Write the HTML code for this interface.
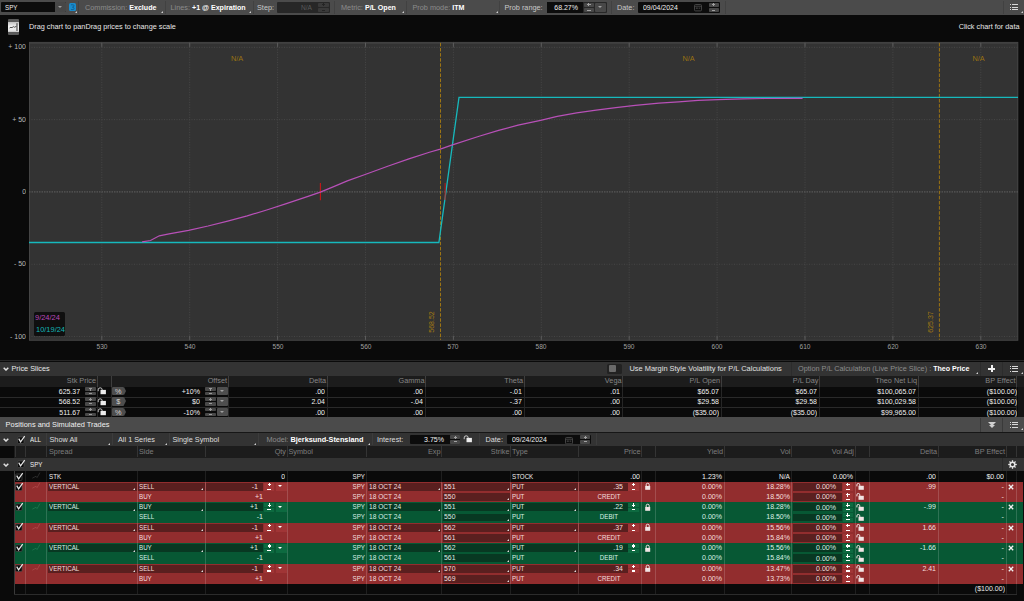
<!DOCTYPE html><html><head><meta charset="utf-8"><title>Analyze</title><style>
*{box-sizing:border-box;margin:0;padding:0}
html,body{width:1024px;height:601px;overflow:hidden;background:#0a0a0a}
body{position:relative;font-family:"Liberation Sans",sans-serif;font-size:7.3px;color:#e6e6e6;line-height:1}
.a{position:absolute;white-space:nowrap}
.t{position:absolute;white-space:nowrap;line-height:10px;height:10px}
.r{text-align:right}
.c{text-align:center}
.b{font-weight:bold;color:#fff;font-size:7.1px}
.g{color:#8c8c8c}
.sep{position:absolute;width:1px;background:#3a3a3a}
.tri{position:absolute;width:0;height:0;border-left:2.6px solid transparent;border-bottom:2.6px solid #cfcfcf}
.spin{position:absolute;width:11px;height:10px}
.spin i{position:absolute;left:0;width:11px;height:4.2px;background:#505050;border-radius:1px}
.spin i:first-child{top:0}
.spin i:last-child{bottom:0}
.spin i:before{content:"";position:absolute;left:4px;top:1.6px;width:3px;height:1px;background:#a8a8a8}
.spin i:first-child:after{content:"";position:absolute;left:5px;top:0.6px;width:1px;height:3px;background:#a8a8a8}
.dd{position:absolute;background:#4e4e4e;border-radius:1px}
.dd:after{content:"";position:absolute;left:50%;top:50%;margin-left:-2.5px;margin-top:-1px;border-left:2.3px solid transparent;border-right:2.3px solid transparent;border-top:2.6px solid #a0a0a0}
</style></head><body>
<div class="a" style="left:0px;top:0px;width:1024px;height:14.5px;background:#4b4b4b;"></div>
<div class="a" style="left:1px;top:2.1px;width:65px;height:10.4px;background:#0c0c0c;border-radius:1px"></div>
<div class="t " style="left:5px;top:2.50px;transform:scaleX(0.85);transform-origin:0 50%;color:#f0f0f0">SPY</div>
<div class="dd" style="left:55px;top:2.2px;width:11px;height:10.2px;background:#474747;border-radius:0 1px 1px 0"></div>
<div class="a" style="left:69.4px;top:2.7px;width:6.6px;height:8.4px;background:#1a8ccc;border-radius:1.5px"></div>
<svg class="a" style="left:69.4px;top:2.7px" width="6.6" height="8.4" viewBox="0 0 6.6 8.4"><path d="M2 1.8 H4.2 Q5 1.8 5 2.8 Q5 4.2 3.4 4.2 Q5 4.2 5 5.6 Q5 6.6 4.2 6.6 H2" fill="none" stroke="#0d5f94" stroke-width="0.9"/></svg>
<div class="tri" style="left:74.8px;top:10.9px;border-bottom-color:#cfcfcf"></div>
<div class="sep" style="left:77.7px;top:1px;height:13px;background:#414141"></div>
<div class="t g" style="left:85px;top:2.50px;">Commission: <span class="b">Exclude</span></div>
<div class="tri" style="left:161px;top:10.5px;border-bottom-color:#cfcfcf"></div>
<div class="sep" style="left:164.5px;top:1px;height:13px;background:#414141"></div>
<div class="t g" style="left:170.5px;top:2.50px;">Lines: <span class="b">+1 @ Expiration</span></div>
<div class="tri" style="left:249px;top:10.5px;border-bottom-color:#cfcfcf"></div>
<div class="sep" style="left:252.5px;top:1px;height:13px;background:#414141"></div>
<div class="t " style="left:257px;top:2.50px;color:#c8c8c8">Step:</div>
<div class="a" style="left:277px;top:1.9px;width:52.5px;height:11px;background:#272727;border-radius:1px"></div>
<div class="t r " style="left:111.5px;width:200px;top:2.50px;transform:scaleX(0.9);transform-origin:100% 50%;color:#5a5a5a">N/A</div>
<div class="a" style="left:318px;top:2.7px;width:10.5px;height:4.2px;background:#3a3a3a;border-radius:0.8px"></div>
<div class="a" style="left:321.6px;top:4.300000000000001px;width:3.3px;height:1px;background:#242424"></div>
<div class="a" style="left:322.75px;top:3.2px;width:1px;height:3.2px;background:#242424"></div>
<div class="a" style="left:318px;top:8.1px;width:10.5px;height:4.2px;background:#3a3a3a;border-radius:0.8px"></div>
<div class="a" style="left:321.6px;top:9.7px;width:3.3px;height:1px;background:#242424"></div>
<div class="sep" style="left:334.0px;top:1px;height:13px;background:#414141"></div>
<div class="t g" style="left:341px;top:2.50px;">Metric: <span class="b">P/L Open</span></div>
<div class="tri" style="left:402px;top:10.5px;border-bottom-color:#cfcfcf"></div>
<div class="sep" style="left:405.5px;top:1px;height:13px;background:#414141"></div>
<div class="t g" style="left:412.5px;top:2.50px;">Prob mode: <span class="b">ITM</span></div>
<div class="tri" style="left:496px;top:10.5px;border-bottom-color:#cfcfcf"></div>
<div class="sep" style="left:499.0px;top:1px;height:13px;background:#414141"></div>
<div class="t " style="left:504.5px;top:2.50px;color:#c8c8c8">Prob range:</div>
<div class="a" style="left:547px;top:1.9px;width:59.5px;height:11px;background:#272727;border-radius:1px"></div>
<div class="a" style="left:547px;top:1.9px;width:36.3px;height:11px;background:#0c0c0c;"></div>
<div class="t r " style="left:378px;width:200px;top:2.50px;transform:scaleX(0.96);transform-origin:100% 50%;color:#f0f0f0">68.27%</div>
<div class="a" style="left:583.7px;top:2.7px;width:10.5px;height:4.2px;background:#484848;border-radius:0.8px"></div>
<div class="a" style="left:587.3000000000001px;top:4.300000000000001px;width:3.3px;height:1px;background:#a0a0a0"></div>
<div class="a" style="left:588.45px;top:3.2px;width:1px;height:3.2px;background:#a0a0a0"></div>
<div class="a" style="left:583.7px;top:8.1px;width:10.5px;height:4.2px;background:#484848;border-radius:0.8px"></div>
<div class="a" style="left:587.3000000000001px;top:9.7px;width:3.3px;height:1px;background:#a0a0a0"></div>
<div class="dd" style="left:595.3px;top:2.7px;width:10.6px;height:9.5px;background:#484848"></div>
<div class="sep" style="left:611.0px;top:1px;height:13px;background:#414141"></div>
<div class="t " style="left:617px;top:2.50px;color:#c8c8c8">Date:</div>
<div class="a" style="left:638px;top:1.9px;width:81.6px;height:11px;background:#0c0c0c;border-radius:1px"></div>
<div class="t " style="left:643px;top:2.50px;transform:scaleX(0.952);transform-origin:0 50%;color:#f0f0f0">09/04/2024</div>
<svg class="a" style="left:694px;top:4.3px" width="8" height="7.4" viewBox="0 0 8 7.4"><rect x="0.5" y="0.5" width="7" height="6.4" rx="1" fill="none" stroke="#4a4a4a" stroke-width="0.9"/><line x1="0.5" y1="2.2" x2="7.5" y2="2.2" stroke="#4a4a4a" stroke-width="0.9"/><rect x="1.8" y="3.4" width="2" height="1.6" fill="#3a3a3a"/><rect x="4.6" y="3.4" width="1.6" height="1.6" fill="#333"/></svg>
<div class="a" style="left:708.5px;top:2.7px;width:10.5px;height:4.2px;background:#484848;border-radius:0.8px"></div>
<div class="a" style="left:712.1px;top:4.300000000000001px;width:3.3px;height:1px;background:#a0a0a0"></div>
<div class="a" style="left:713.25px;top:3.2px;width:1px;height:3.2px;background:#a0a0a0"></div>
<div class="a" style="left:708.5px;top:8.1px;width:10.5px;height:4.2px;background:#484848;border-radius:0.8px"></div>
<div class="a" style="left:712.1px;top:9.7px;width:3.3px;height:1px;background:#a0a0a0"></div>
<div class="sep" style="left:725.0px;top:1px;height:13px;background:#414141"></div>
<div class="sep" style="left:1002.5px;top:1px;height:13px;background:#414141"></div>
<div class="a" style="left:1010px;top:3.8px;width:1.2px;height:1.2px;background:#d8d8d8"></div>
<div class="a" style="left:1012px;top:3.8px;width:5.5px;height:1.2px;background:#d8d8d8"></div>
<div class="a" style="left:1010px;top:6.5px;width:1.2px;height:1.2px;background:#d8d8d8"></div>
<div class="a" style="left:1012px;top:6.5px;width:5.5px;height:1.2px;background:#d8d8d8"></div>
<div class="a" style="left:1010px;top:9.2px;width:1.2px;height:1.2px;background:#d8d8d8"></div>
<div class="a" style="left:1012px;top:9.2px;width:5.5px;height:1.2px;background:#d8d8d8"></div>
<div class="tri" style="left:1020.5px;top:11px;border-bottom-color:#cfcfcf"></div>
<div class="a" style="left:8.4px;top:19.3px;width:10.6px;height:16.2px;border-radius:1px;background:linear-gradient(#5a5a5a 0,#5a5a5a 20%,#c4c4c4 21%,#f4f4f4 48%,#e0e0e0 78%,#5a5a5a 79%,#5a5a5a 100%)"></div>
<svg class="a" style="left:8.4px;top:21.8px" width="10.6" height="10.6" viewBox="0 0 10.6 10.6"><path d="M1.6 6 L3 5.2 L4 5.8 L5.2 4.6 L6.4 5.2 L8.4 4.4" stroke="#222" stroke-width="0.8" fill="none"/><line x1="9" y1="1.2" x2="9" y2="9" stroke="#222" stroke-width="0.9"/></svg>
<div class="t " style="left:29px;top:22.30px;color:#e8e8e8">Drag chart to panDrag prices to change scale</div>
<div class="t r " style="left:819.5px;width:200px;top:22.30px;color:#e8e8e8">Click chart for data</div>
<svg class="a" style="left:0;top:0" width="1024" height="360" viewBox="0 0 1024 360"><rect x="29" y="41.9" width="989.3" height="298.90000000000003" fill="#454545"/><rect x="30" y="42.9" width="987.3" height="296.90000000000003" fill="#333333"/><rect x="30" y="42.9" width="987.3" height="1.2" fill="#3d3d3d"/><line x1="101.80" y1="41.9" x2="101.80" y2="340.8" stroke="#474747" stroke-width="1" stroke-dasharray="1 1.5"/><line x1="189.70" y1="41.9" x2="189.70" y2="340.8" stroke="#474747" stroke-width="1" stroke-dasharray="1 1.5"/><line x1="277.60" y1="41.9" x2="277.60" y2="340.8" stroke="#474747" stroke-width="1" stroke-dasharray="1 1.5"/><line x1="365.50" y1="41.9" x2="365.50" y2="340.8" stroke="#474747" stroke-width="1" stroke-dasharray="1 1.5"/><line x1="453.40" y1="41.9" x2="453.40" y2="340.8" stroke="#474747" stroke-width="1" stroke-dasharray="1 1.5"/><line x1="541.30" y1="41.9" x2="541.30" y2="340.8" stroke="#474747" stroke-width="1" stroke-dasharray="1 1.5"/><line x1="629.20" y1="41.9" x2="629.20" y2="340.8" stroke="#474747" stroke-width="1" stroke-dasharray="1 1.5"/><line x1="717.10" y1="41.9" x2="717.10" y2="340.8" stroke="#474747" stroke-width="1" stroke-dasharray="1 1.5"/><line x1="805.00" y1="41.9" x2="805.00" y2="340.8" stroke="#474747" stroke-width="1" stroke-dasharray="1 1.5"/><line x1="892.90" y1="41.9" x2="892.90" y2="340.8" stroke="#474747" stroke-width="1" stroke-dasharray="1 1.5"/><line x1="980.80" y1="41.9" x2="980.80" y2="340.8" stroke="#474747" stroke-width="1" stroke-dasharray="1 1.5"/><line x1="29" y1="47.35" x2="1018.3" y2="47.35" stroke="#474747" stroke-width="1" stroke-dasharray="1 1.5"/><line x1="29" y1="119.65" x2="1018.3" y2="119.65" stroke="#474747" stroke-width="1" stroke-dasharray="1 1.5"/><line x1="29" y1="264.25" x2="1018.3" y2="264.25" stroke="#474747" stroke-width="1" stroke-dasharray="1 1.5"/><line x1="29" y1="336.55" x2="1018.3" y2="336.55" stroke="#474747" stroke-width="1" stroke-dasharray="1 1.5"/><line x1="29" y1="191.95" x2="1018.3" y2="191.95" stroke="#585858" stroke-width="1.3" stroke-dasharray="1.5 1"/><line x1="101.80" y1="42.9" x2="101.80" y2="46.9" stroke="#5c5c5c" stroke-width="1"/><line x1="101.80" y1="335.8" x2="101.80" y2="339.8" stroke="#5c5c5c" stroke-width="1"/><line x1="189.70" y1="42.9" x2="189.70" y2="46.9" stroke="#5c5c5c" stroke-width="1"/><line x1="189.70" y1="335.8" x2="189.70" y2="339.8" stroke="#5c5c5c" stroke-width="1"/><line x1="277.60" y1="42.9" x2="277.60" y2="46.9" stroke="#5c5c5c" stroke-width="1"/><line x1="277.60" y1="335.8" x2="277.60" y2="339.8" stroke="#5c5c5c" stroke-width="1"/><line x1="365.50" y1="42.9" x2="365.50" y2="46.9" stroke="#5c5c5c" stroke-width="1"/><line x1="365.50" y1="335.8" x2="365.50" y2="339.8" stroke="#5c5c5c" stroke-width="1"/><line x1="453.40" y1="42.9" x2="453.40" y2="46.9" stroke="#5c5c5c" stroke-width="1"/><line x1="453.40" y1="335.8" x2="453.40" y2="339.8" stroke="#5c5c5c" stroke-width="1"/><line x1="541.30" y1="42.9" x2="541.30" y2="46.9" stroke="#5c5c5c" stroke-width="1"/><line x1="541.30" y1="335.8" x2="541.30" y2="339.8" stroke="#5c5c5c" stroke-width="1"/><line x1="629.20" y1="42.9" x2="629.20" y2="46.9" stroke="#5c5c5c" stroke-width="1"/><line x1="629.20" y1="335.8" x2="629.20" y2="339.8" stroke="#5c5c5c" stroke-width="1"/><line x1="717.10" y1="42.9" x2="717.10" y2="46.9" stroke="#5c5c5c" stroke-width="1"/><line x1="717.10" y1="335.8" x2="717.10" y2="339.8" stroke="#5c5c5c" stroke-width="1"/><line x1="805.00" y1="42.9" x2="805.00" y2="46.9" stroke="#5c5c5c" stroke-width="1"/><line x1="805.00" y1="335.8" x2="805.00" y2="339.8" stroke="#5c5c5c" stroke-width="1"/><line x1="892.90" y1="42.9" x2="892.90" y2="46.9" stroke="#5c5c5c" stroke-width="1"/><line x1="892.90" y1="335.8" x2="892.90" y2="339.8" stroke="#5c5c5c" stroke-width="1"/><line x1="980.80" y1="42.9" x2="980.80" y2="46.9" stroke="#5c5c5c" stroke-width="1"/><line x1="980.80" y1="335.8" x2="980.80" y2="339.8" stroke="#5c5c5c" stroke-width="1"/><line x1="440.5" y1="42.9" x2="440.5" y2="339.8" stroke="#9c7414" stroke-width="1" stroke-dasharray="3.5 1.6"/><line x1="939.4" y1="42.9" x2="939.4" y2="339.8" stroke="#9c7414" stroke-width="1" stroke-dasharray="3.5 1.6"/><line x1="320.4" y1="183" x2="320.4" y2="200.2" stroke="#c81818" stroke-width="1.1"/><polyline fill="none" stroke="#16b9bd" stroke-width="1.3" points="29,242.5 438.9,242.5 459,97.45 1018,97.45"/><polyline fill="none" stroke="#b850b8" stroke-width="1.2" points="142.1,241.9 150.5,240.5 159.3,235.8 169.1,233.8 188.6,230.3 208.1,226 227.7,221.1 247.2,215.9 266.7,210 286.3,203.6 305.8,197.1 320.4,192.1 333.7,186.6 347.3,180.9 365.8,174.2 388.4,166 408.9,158.9 429.4,152.2 440.3,149.1 451.7,145.1 479.1,136.3 498.6,130.4 518.1,125.2 540.6,120.3 557.2,116.4 576.7,112.9 596.2,110.1 615.8,107.6 635.3,105.4 659,103.2 678.6,101.8 698.1,100.4 717.7,99.6 743,98.9 764.5,98.5 802.6,98.3"/><line x1="445.1" y1="183" x2="445.1" y2="200" stroke="#c01818" stroke-width="1"/></svg>
<div class="t r " style="left:-173.8px;width:200px;top:42.45px;transform:scaleX(0.955);transform-origin:100% 50%;color:#b8b8b8;font-size:7.3px">+ 100</div>
<div class="t r " style="left:-173.8px;width:200px;top:114.75px;transform:scaleX(0.96);transform-origin:100% 50%;color:#b8b8b8;font-size:7.3px">+ 50</div>
<div class="t r " style="left:-173.8px;width:200px;top:187.05px;transform:scaleX(0.94);transform-origin:100% 50%;color:#b8b8b8;font-size:7.3px">0</div>
<div class="t r " style="left:-173.8px;width:200px;top:259.35px;transform:scaleX(0.96);transform-origin:100% 50%;color:#b8b8b8;font-size:7.3px">- 50</div>
<div class="t r " style="left:-173.8px;width:200px;top:331.65px;transform:scaleX(0.955);transform-origin:100% 50%;color:#b8b8b8;font-size:7.3px">- 100</div>
<div class="t c " style="left:1.7999999999999972px;width:200px;top:341.50px;transform:scaleX(0.94);transform-origin:50% 50%;color:#a0a0a0;font-size:7px">530</div>
<div class="t c " style="left:89.69999999999999px;width:200px;top:341.50px;transform:scaleX(0.94);transform-origin:50% 50%;color:#a0a0a0;font-size:7px">540</div>
<div class="t c " style="left:177.59999999999997px;width:200px;top:341.50px;transform:scaleX(0.94);transform-origin:50% 50%;color:#a0a0a0;font-size:7px">550</div>
<div class="t c " style="left:265.5px;width:200px;top:341.50px;transform:scaleX(0.94);transform-origin:50% 50%;color:#a0a0a0;font-size:7px">560</div>
<div class="t c " style="left:353.4px;width:200px;top:341.50px;transform:scaleX(0.94);transform-origin:50% 50%;color:#a0a0a0;font-size:7px">570</div>
<div class="t c " style="left:441.29999999999995px;width:200px;top:341.50px;transform:scaleX(0.94);transform-origin:50% 50%;color:#a0a0a0;font-size:7px">580</div>
<div class="t c " style="left:529.1999999999999px;width:200px;top:341.50px;transform:scaleX(0.94);transform-origin:50% 50%;color:#a0a0a0;font-size:7px">590</div>
<div class="t c " style="left:617.0999999999999px;width:200px;top:341.50px;transform:scaleX(0.94);transform-origin:50% 50%;color:#a0a0a0;font-size:7px">600</div>
<div class="t c " style="left:704.9999999999999px;width:200px;top:341.50px;transform:scaleX(0.94);transform-origin:50% 50%;color:#a0a0a0;font-size:7px">610</div>
<div class="t c " style="left:792.8999999999999px;width:200px;top:341.50px;transform:scaleX(0.94);transform-origin:50% 50%;color:#a0a0a0;font-size:7px">620</div>
<div class="t c " style="left:880.7999999999998px;width:200px;top:341.50px;transform:scaleX(0.94);transform-origin:50% 50%;color:#a0a0a0;font-size:7px">630</div>
<div class="t c" style="left:137px;width:200px;top:53.9px;color:#9a7212;font-size:7.3px">N/A</div>
<div class="t c" style="left:588.5px;width:200px;top:53.9px;color:#9a7212;font-size:7.3px">N/A</div>
<div class="t c" style="left:878.5px;width:200px;top:53.9px;color:#9a7212;font-size:7.3px">N/A</div>
<div class="a" style="left:412.3px;top:316.5px;width:40px;height:10px;line-height:10px;text-align:center;transform:rotate(-90deg);color:#a57a12;font-size:7px">568.52</div>
<div class="a" style="left:911.2px;top:316.5px;width:40px;height:10px;line-height:10px;text-align:center;transform:rotate(-90deg);color:#a57a12;font-size:7px">625.37</div>
<div class="a" style="left:33.9px;top:311.8px;width:30.8px;height:24.1px;background:#0f0f0f;border-radius:1.6px"></div>
<div class="t " style="left:35.4px;top:313.20px;transform:scaleX(0.957);transform-origin:0 50%;color:#bb48bb;font-size:7.8px">9/24/24</div>
<div class="t " style="left:35.8px;top:324.90px;transform:scaleX(0.955);transform-origin:0 50%;color:#14b6b8;font-size:7.8px">10/19/24</div>
<div class="a" style="left:0px;top:359.8px;width:1024px;height:1.2px;background:#262626;"></div>
<div class="a" style="left:0px;top:362px;width:1024px;height:14px;background:#333333;"></div>
<svg class="a" style="left:3px;top:367.1px" width="6" height="4" viewBox="0 0 6 4"><path d="M0.7 0.7 L3 3 L5.3 0.7" fill="none" stroke="#e0e0e0" stroke-width="1.5"/></svg>
<div class="t " style="left:11.5px;top:364.10px;color:#e8e8e8">Price Slices</div>
<div class="a" style="left:606.8px;top:363.6px;width:15.4px;height:10.4px;background:#222;border-radius:1.5px"></div>
<div class="a" style="left:608.6px;top:365.2px;width:7.4px;height:7.2px;background:#6a6a6a;border-radius:1px"></div>
<div class="t " style="left:629.5px;top:364.10px;color:#e0e0e0;font-size:7.45px">Use Margin Style Volatility for P/L Calculations</div>
<div class="sep" style="left:791.0px;top:362px;height:13.5px;background:#2c2c2c"></div>
<div class="t g" style="left:798px;top:364.10px;">Option P/L Calculation (Live Price Slice) : <span class="b">Theo Price</span></div>
<div class="tri" style="left:976px;top:372px;border-bottom-color:#cfcfcf"></div>
<div class="sep" style="left:980.0px;top:362px;height:13.5px;background:#2c2c2c"></div>
<div class="a" style="left:987.6px;top:367.6px;width:7.8px;height:2px;background:#f2f2f2"></div><div class="a" style="left:990.5px;top:364.7px;width:2px;height:7.8px;background:#f2f2f2"></div>
<div class="sep" style="left:1002.0px;top:362px;height:13.5px;background:#2c2c2c"></div>
<div class="a" style="left:1010px;top:365.5px;width:1.2px;height:1.2px;background:#d8d8d8"></div>
<div class="a" style="left:1012px;top:365.5px;width:5.5px;height:1.2px;background:#d8d8d8"></div>
<div class="a" style="left:1010px;top:368.2px;width:1.2px;height:1.2px;background:#d8d8d8"></div>
<div class="a" style="left:1012px;top:368.2px;width:5.5px;height:1.2px;background:#d8d8d8"></div>
<div class="a" style="left:1010px;top:370.9px;width:1.2px;height:1.2px;background:#d8d8d8"></div>
<div class="a" style="left:1012px;top:370.9px;width:5.5px;height:1.2px;background:#d8d8d8"></div>
<div class="tri" style="left:1021px;top:372px;border-bottom-color:#cfcfcf"></div>
<div class="a" style="left:0px;top:376px;width:1024px;height:11px;background:#1c1c1c;"></div>
<div class="sep" style="left:96.5px;top:376px;height:10.5px;background:#3d3d3d"></div>
<div class="sep" style="left:110.5px;top:376px;height:10.5px;background:#3d3d3d"></div>
<div class="sep" style="left:227.5px;top:376px;height:10.5px;background:#3d3d3d"></div>
<div class="sep" style="left:326.5px;top:376px;height:10.5px;background:#3d3d3d"></div>
<div class="sep" style="left:425.0px;top:376px;height:10.5px;background:#3d3d3d"></div>
<div class="sep" style="left:523.5px;top:376px;height:10.5px;background:#3d3d3d"></div>
<div class="sep" style="left:622.0px;top:376px;height:10.5px;background:#3d3d3d"></div>
<div class="sep" style="left:720.5px;top:376px;height:10.5px;background:#3d3d3d"></div>
<div class="sep" style="left:819.0px;top:376px;height:10.5px;background:#3d3d3d"></div>
<div class="sep" style="left:917.5px;top:376px;height:10.5px;background:#3d3d3d"></div>
<div class="sep" style="left:1016.0px;top:376px;height:10.5px;background:#3d3d3d"></div>
<div class="t r " style="left:-104px;width:200px;top:376.00px;color:#858585">Stk Price</div>
<div class="t r " style="left:27px;width:200px;top:376.00px;color:#858585">Offset</div>
<div class="t r " style="left:126px;width:200px;top:376.00px;color:#858585">Delta</div>
<div class="t r " style="left:224.5px;width:200px;top:376.00px;color:#858585">Gamma</div>
<div class="t r " style="left:323px;width:200px;top:376.00px;color:#858585">Theta</div>
<div class="t r " style="left:421.5px;width:200px;top:376.00px;color:#858585">Vega</div>
<div class="t r " style="left:520px;width:200px;top:376.00px;color:#858585">P/L Open</div>
<div class="t r " style="left:618.5px;width:200px;top:376.00px;color:#858585">P/L Day</div>
<div class="t r " style="left:717px;width:200px;top:376.00px;color:#858585">Theo Net Liq</div>
<div class="t r " style="left:815.5px;width:200px;top:376.00px;color:#858585">BP Effect</div>
<div class="a" style="left:0px;top:386.5px;width:1017px;height:10.25px;background:#0a0a0a;"></div>
<div class="sep" style="left:96.5px;top:386.5px;height:10.25px;background:#262626"></div>
<div class="sep" style="left:110.5px;top:386.5px;height:10.25px;background:#262626"></div>
<div class="sep" style="left:227.5px;top:386.5px;height:10.25px;background:#262626"></div>
<div class="sep" style="left:326.5px;top:386.5px;height:10.25px;background:#262626"></div>
<div class="sep" style="left:425.0px;top:386.5px;height:10.25px;background:#262626"></div>
<div class="sep" style="left:523.5px;top:386.5px;height:10.25px;background:#262626"></div>
<div class="sep" style="left:622.0px;top:386.5px;height:10.25px;background:#262626"></div>
<div class="sep" style="left:720.5px;top:386.5px;height:10.25px;background:#262626"></div>
<div class="sep" style="left:819.0px;top:386.5px;height:10.25px;background:#262626"></div>
<div class="sep" style="left:917.5px;top:386.5px;height:10.25px;background:#262626"></div>
<div class="sep" style="left:1016.0px;top:386.5px;height:10.25px;background:#262626"></div>
<div class="t r " style="left:-120.5px;width:200px;top:387.10px;transform:scaleX(0.95);transform-origin:100% 50%;color:#f0f0f0">625.37</div>
<div class="a" style="left:85px;top:387.00px;width:11px;height:3.9px;background:#494949;border-radius:0.8px"></div>
<div class="a" style="left:88.9px;top:388.45px;width:3.2px;height:1px;background:#9a9a9a"></div>
<div class="a" style="left:90px;top:387.50px;width:1px;height:3px;background:#9a9a9a"></div>
<div class="a" style="left:85px;top:392.00px;width:11px;height:3.3px;background:#494949;border-radius:0.8px"></div>
<div class="a" style="left:88.9px;top:393.15px;width:3.2px;height:1px;background:#9a9a9a"></div>
<svg class="a" style="left:97.3px;top:386.4px" width="10" height="9" viewBox="0 0 10 9"><path d="M1.2 5.2 V3.8 A2 2 0 0 1 5.2 3.8 V4.2" fill="none" stroke="#ececec" stroke-width="0.9" opacity="0.9"/><rect x="3.5" y="3.9" width="5.4" height="4.3" fill="#ececec"/></svg>
<div class="a" style="left:112.1px;top:387.1px;width:12px;height:8.2px;background:#4e4e4e;border-radius:1px"></div><div class="a" style="left:124.1px;top:387.1px;width:0;height:0;border-top:4.1px solid transparent;border-bottom:4.1px solid transparent;border-left:2.7px solid #4e4e4e"></div>
<div class="t c " style="left:18.299999999999997px;width:200px;top:387.10px;color:#d4d4d4;font-size:7.3px">%</div>
<div class="t r " style="left:-0.5px;width:200px;top:387.10px;transform:scaleX(0.97);transform-origin:100% 50%;color:#f0f0f0">+10%</div>
<div class="a" style="left:205px;top:387.00px;width:11px;height:3.9px;background:#494949;border-radius:0.8px"></div>
<div class="a" style="left:208.9px;top:388.45px;width:3.2px;height:1px;background:#9a9a9a"></div>
<div class="a" style="left:210px;top:387.50px;width:1px;height:3px;background:#9a9a9a"></div>
<div class="a" style="left:205px;top:392.00px;width:11px;height:3.3px;background:#494949;border-radius:0.8px"></div>
<div class="a" style="left:208.9px;top:393.15px;width:3.2px;height:1px;background:#9a9a9a"></div>
<div class="dd" style="left:217px;top:387.0px;width:10.5px;height:8.3px"></div>
<div class="t r " style="left:124.80000000000001px;width:200px;top:387.10px;transform:scaleX(0.96);transform-origin:100% 50%;color:#f0f0f0">.00</div>
<div class="t r " style="left:223.3px;width:200px;top:387.10px;transform:scaleX(0.96);transform-origin:100% 50%;color:#f0f0f0">.00</div>
<div class="t r " style="left:321.79999999999995px;width:200px;top:387.10px;transform:scaleX(0.97);transform-origin:100% 50%;color:#f0f0f0">-.01</div>
<div class="t r " style="left:420.29999999999995px;width:200px;top:387.10px;transform:scaleX(0.96);transform-origin:100% 50%;color:#f0f0f0">.01</div>
<div class="t r " style="left:518.8px;width:200px;top:387.10px;transform:scaleX(0.96);transform-origin:100% 50%;color:#f0f0f0">$65.07</div>
<div class="t r " style="left:617.3px;width:200px;top:387.10px;transform:scaleX(0.96);transform-origin:100% 50%;color:#f0f0f0">$65.07</div>
<div class="t r " style="left:715.8px;width:200px;top:387.10px;transform:scaleX(0.956);transform-origin:100% 50%;color:#f0f0f0">$100,065.07</div>
<div class="t r " style="left:816.5px;width:200px;top:387.10px;transform:scaleX(0.967);transform-origin:100% 50%;color:#f0f0f0">($100.00)</div>
<div class="a" style="left:0px;top:396.75px;width:1017px;height:10.25px;background:#0a0a0a;"></div>
<div class="a" style="left:0px;top:396.75px;width:1017px;height:0.8px;background:#2a2a2a;"></div>
<div class="sep" style="left:96.5px;top:396.75px;height:10.25px;background:#262626"></div>
<div class="sep" style="left:110.5px;top:396.75px;height:10.25px;background:#262626"></div>
<div class="sep" style="left:227.5px;top:396.75px;height:10.25px;background:#262626"></div>
<div class="sep" style="left:326.5px;top:396.75px;height:10.25px;background:#262626"></div>
<div class="sep" style="left:425.0px;top:396.75px;height:10.25px;background:#262626"></div>
<div class="sep" style="left:523.5px;top:396.75px;height:10.25px;background:#262626"></div>
<div class="sep" style="left:622.0px;top:396.75px;height:10.25px;background:#262626"></div>
<div class="sep" style="left:720.5px;top:396.75px;height:10.25px;background:#262626"></div>
<div class="sep" style="left:819.0px;top:396.75px;height:10.25px;background:#262626"></div>
<div class="sep" style="left:917.5px;top:396.75px;height:10.25px;background:#262626"></div>
<div class="sep" style="left:1016.0px;top:396.75px;height:10.25px;background:#262626"></div>
<div class="t r " style="left:-120.5px;width:200px;top:397.35px;transform:scaleX(0.95);transform-origin:100% 50%;color:#f0f0f0">568.52</div>
<div class="a" style="left:85px;top:397.25px;width:11px;height:3.9px;background:#494949;border-radius:0.8px"></div>
<div class="a" style="left:88.9px;top:398.70px;width:3.2px;height:1px;background:#9a9a9a"></div>
<div class="a" style="left:90px;top:397.75px;width:1px;height:3px;background:#9a9a9a"></div>
<div class="a" style="left:85px;top:402.25px;width:11px;height:3.3px;background:#494949;border-radius:0.8px"></div>
<div class="a" style="left:88.9px;top:403.40px;width:3.2px;height:1px;background:#9a9a9a"></div>
<svg class="a" style="left:97.3px;top:396.65px" width="10" height="9" viewBox="0 0 10 9"><path d="M1.2 5.2 V3.8 A2 2 0 0 1 5.2 3.8 V4.2" fill="none" stroke="#ececec" stroke-width="0.9" opacity="0.9"/><rect x="3.5" y="3.9" width="5.4" height="4.3" fill="#ececec"/></svg>
<div class="a" style="left:112.1px;top:397.35px;width:12px;height:8.2px;background:#4e4e4e;border-radius:1px"></div><div class="a" style="left:124.1px;top:397.35px;width:0;height:0;border-top:4.1px solid transparent;border-bottom:4.1px solid transparent;border-left:2.7px solid #4e4e4e"></div>
<div class="t c " style="left:18.299999999999997px;width:200px;top:397.35px;color:#d4d4d4;font-size:7.3px">$</div>
<div class="t r " style="left:-0.5px;width:200px;top:397.35px;transform:scaleX(0.97);transform-origin:100% 50%;color:#f0f0f0">$0</div>
<div class="a" style="left:205px;top:397.25px;width:11px;height:3.9px;background:#494949;border-radius:0.8px"></div>
<div class="a" style="left:208.9px;top:398.70px;width:3.2px;height:1px;background:#9a9a9a"></div>
<div class="a" style="left:210px;top:397.75px;width:1px;height:3px;background:#9a9a9a"></div>
<div class="a" style="left:205px;top:402.25px;width:11px;height:3.3px;background:#494949;border-radius:0.8px"></div>
<div class="a" style="left:208.9px;top:403.40px;width:3.2px;height:1px;background:#9a9a9a"></div>
<div class="dd" style="left:217px;top:397.25px;width:10.5px;height:8.3px"></div>
<div class="t r " style="left:124.80000000000001px;width:200px;top:397.35px;transform:scaleX(0.955);transform-origin:100% 50%;color:#f0f0f0">2.04</div>
<div class="t r " style="left:223.3px;width:200px;top:397.35px;transform:scaleX(0.97);transform-origin:100% 50%;color:#f0f0f0">-.04</div>
<div class="t r " style="left:321.79999999999995px;width:200px;top:397.35px;transform:scaleX(0.97);transform-origin:100% 50%;color:#f0f0f0">-.37</div>
<div class="t r " style="left:420.29999999999995px;width:200px;top:397.35px;transform:scaleX(0.96);transform-origin:100% 50%;color:#f0f0f0">.00</div>
<div class="t r " style="left:518.8px;width:200px;top:397.35px;transform:scaleX(0.96);transform-origin:100% 50%;color:#f0f0f0">$29.58</div>
<div class="t r " style="left:617.3px;width:200px;top:397.35px;transform:scaleX(0.96);transform-origin:100% 50%;color:#f0f0f0">$29.58</div>
<div class="t r " style="left:715.8px;width:200px;top:397.35px;transform:scaleX(0.956);transform-origin:100% 50%;color:#f0f0f0">$100,029.58</div>
<div class="t r " style="left:816.5px;width:200px;top:397.35px;transform:scaleX(0.967);transform-origin:100% 50%;color:#f0f0f0">($100.00)</div>
<div class="a" style="left:0px;top:407.0px;width:1017px;height:10.25px;background:#0a0a0a;"></div>
<div class="a" style="left:0px;top:407.0px;width:1017px;height:0.8px;background:#2a2a2a;"></div>
<div class="sep" style="left:96.5px;top:407.0px;height:10.25px;background:#262626"></div>
<div class="sep" style="left:110.5px;top:407.0px;height:10.25px;background:#262626"></div>
<div class="sep" style="left:227.5px;top:407.0px;height:10.25px;background:#262626"></div>
<div class="sep" style="left:326.5px;top:407.0px;height:10.25px;background:#262626"></div>
<div class="sep" style="left:425.0px;top:407.0px;height:10.25px;background:#262626"></div>
<div class="sep" style="left:523.5px;top:407.0px;height:10.25px;background:#262626"></div>
<div class="sep" style="left:622.0px;top:407.0px;height:10.25px;background:#262626"></div>
<div class="sep" style="left:720.5px;top:407.0px;height:10.25px;background:#262626"></div>
<div class="sep" style="left:819.0px;top:407.0px;height:10.25px;background:#262626"></div>
<div class="sep" style="left:917.5px;top:407.0px;height:10.25px;background:#262626"></div>
<div class="sep" style="left:1016.0px;top:407.0px;height:10.25px;background:#262626"></div>
<div class="t r " style="left:-120.5px;width:200px;top:407.60px;transform:scaleX(0.95);transform-origin:100% 50%;color:#f0f0f0">511.67</div>
<div class="a" style="left:85px;top:407.50px;width:11px;height:3.9px;background:#494949;border-radius:0.8px"></div>
<div class="a" style="left:88.9px;top:408.95px;width:3.2px;height:1px;background:#9a9a9a"></div>
<div class="a" style="left:90px;top:408.00px;width:1px;height:3px;background:#9a9a9a"></div>
<div class="a" style="left:85px;top:412.50px;width:11px;height:3.3px;background:#494949;border-radius:0.8px"></div>
<div class="a" style="left:88.9px;top:413.65px;width:3.2px;height:1px;background:#9a9a9a"></div>
<svg class="a" style="left:97.3px;top:406.9px" width="10" height="9" viewBox="0 0 10 9"><path d="M1.2 5.2 V3.8 A2 2 0 0 1 5.2 3.8 V4.2" fill="none" stroke="#ececec" stroke-width="0.9" opacity="0.9"/><rect x="3.5" y="3.9" width="5.4" height="4.3" fill="#ececec"/></svg>
<div class="a" style="left:112.1px;top:407.6px;width:12px;height:8.2px;background:#4e4e4e;border-radius:1px"></div><div class="a" style="left:124.1px;top:407.6px;width:0;height:0;border-top:4.1px solid transparent;border-bottom:4.1px solid transparent;border-left:2.7px solid #4e4e4e"></div>
<div class="t c " style="left:18.299999999999997px;width:200px;top:407.60px;color:#d4d4d4;font-size:7.3px">%</div>
<div class="t r " style="left:-0.5px;width:200px;top:407.60px;transform:scaleX(0.97);transform-origin:100% 50%;color:#f0f0f0">-10%</div>
<div class="a" style="left:205px;top:407.50px;width:11px;height:3.9px;background:#494949;border-radius:0.8px"></div>
<div class="a" style="left:208.9px;top:408.95px;width:3.2px;height:1px;background:#9a9a9a"></div>
<div class="a" style="left:210px;top:408.00px;width:1px;height:3px;background:#9a9a9a"></div>
<div class="a" style="left:205px;top:412.50px;width:11px;height:3.3px;background:#494949;border-radius:0.8px"></div>
<div class="a" style="left:208.9px;top:413.65px;width:3.2px;height:1px;background:#9a9a9a"></div>
<div class="dd" style="left:217px;top:407.5px;width:10.5px;height:8.3px"></div>
<div class="t r " style="left:124.80000000000001px;width:200px;top:407.60px;transform:scaleX(0.96);transform-origin:100% 50%;color:#f0f0f0">.00</div>
<div class="t r " style="left:223.3px;width:200px;top:407.60px;transform:scaleX(0.96);transform-origin:100% 50%;color:#f0f0f0">.00</div>
<div class="t r " style="left:321.79999999999995px;width:200px;top:407.60px;transform:scaleX(0.96);transform-origin:100% 50%;color:#f0f0f0">.00</div>
<div class="t r " style="left:420.29999999999995px;width:200px;top:407.60px;transform:scaleX(0.96);transform-origin:100% 50%;color:#f0f0f0">.00</div>
<div class="t r " style="left:518.8px;width:200px;top:407.60px;transform:scaleX(0.97);transform-origin:100% 50%;color:#f0f0f0">($35.00)</div>
<div class="t r " style="left:617.3px;width:200px;top:407.60px;transform:scaleX(0.97);transform-origin:100% 50%;color:#f0f0f0">($35.00)</div>
<div class="t r " style="left:715.8px;width:200px;top:407.60px;transform:scaleX(0.958);transform-origin:100% 50%;color:#f0f0f0">$99,965.00</div>
<div class="t r " style="left:816.5px;width:200px;top:407.60px;transform:scaleX(0.967);transform-origin:100% 50%;color:#f0f0f0">($100.00)</div>
<div class="a" style="left:1017.5px;top:387px;width:6.5px;height:30px;background:#141414;"></div>
<div class="a" style="left:0px;top:417px;width:1024px;height:14.8px;background:#4b4b4b;"></div>
<div class="t " style="left:5.6px;top:420.10px;color:#f0f0f0;font-size:7.4px">Positions and Simulated Trades</div>
<div class="sep" style="left:980.0px;top:418px;height:13.5px;background:#3a3a3a"></div>
<div class="sep" style="left:1002.0px;top:418px;height:13.5px;background:#3a3a3a"></div>
<div class="a" style="left:987.5px;top:421.5px;width:0;height:0;border-left:4px solid transparent;border-right:4px solid transparent;border-top:4px solid #d0d0d0"></div><div class="a" style="left:988.5px;top:424.5px;width:0;height:0;border-left:3px solid transparent;border-right:3px solid transparent;border-top:3px solid #d0d0d0"></div>
<div class="a" style="left:1010px;top:421.5px;width:1.2px;height:1.2px;background:#d8d8d8"></div>
<div class="a" style="left:1012px;top:421.5px;width:5.5px;height:1.2px;background:#d8d8d8"></div>
<div class="a" style="left:1010px;top:424.2px;width:1.2px;height:1.2px;background:#d8d8d8"></div>
<div class="a" style="left:1012px;top:424.2px;width:5.5px;height:1.2px;background:#d8d8d8"></div>
<div class="a" style="left:1010px;top:426.9px;width:1.2px;height:1.2px;background:#d8d8d8"></div>
<div class="a" style="left:1012px;top:426.9px;width:5.5px;height:1.2px;background:#d8d8d8"></div>
<div class="tri" style="left:1021px;top:428px;border-bottom-color:#cfcfcf"></div>
<div class="a" style="left:0px;top:431.8px;width:1024px;height:1.4px;background:#161616;"></div>
<div class="a" style="left:0px;top:433.2px;width:1024px;height:12.7px;background:#333333;"></div>
<svg class="a" style="left:3px;top:437.9px" width="6" height="4" viewBox="0 0 6 4"><path d="M0.7 0.7 L3 3 L5.3 0.7" fill="none" stroke="#e0e0e0" stroke-width="1.5"/></svg>
<svg class="a" style="left:16.6px;top:434.75px" width="10" height="9" viewBox="0 0 10 9"><rect x="0.5" y="2" width="6.5" height="6.5" rx="1.2" fill="#0a0a0a" stroke="#555" stroke-width="0.6"/><path d="M1.7 3.6 L3.6 6.8 L7.7 1.1" fill="none" stroke="#e8e8e8" stroke-width="1.2"/></svg>
<div class="t " style="left:30px;top:434.90px;transform:scaleX(0.85);transform-origin:0 50%;color:#f0f0f0">ALL</div>
<div class="sep" style="left:46.0px;top:433px;height:12px;background:#3c3c3c"></div>
<div class="t " style="left:49.5px;top:434.90px;color:#ddd">Show All</div>
<div class="tri" style="left:108px;top:442.5px;border-bottom-color:#cfcfcf"></div>
<div class="sep" style="left:111.5px;top:433px;height:12px;background:#3c3c3c"></div>
<div class="t " style="left:118px;top:434.90px;color:#ddd">All 1 Series</div>
<div class="tri" style="left:165px;top:442.5px;border-bottom-color:#cfcfcf"></div>
<div class="sep" style="left:169.0px;top:433px;height:12px;background:#3c3c3c"></div>
<div class="t " style="left:172.5px;top:434.90px;color:#ddd">Single Symbol</div>
<div class="tri" style="left:254px;top:442.5px;border-bottom-color:#cfcfcf"></div>
<div class="sep" style="left:258.0px;top:433px;height:12px;background:#3c3c3c"></div>
<div class="t g" style="left:266.5px;top:434.90px;">Model: <span class="b" style="font-size:7.3px">Bjerksund-Stensland</span></div>
<div class="tri" style="left:368px;top:442.5px;border-bottom-color:#cfcfcf"></div>
<div class="sep" style="left:371.5px;top:433px;height:12px;background:#3c3c3c"></div>
<div class="t " style="left:377px;top:434.90px;color:#ddd">Interest:</div>
<div class="a" style="left:409.9px;top:435px;width:50.6px;height:8.8px;background:#0c0c0c;border-radius:1px"></div>
<div class="t r " style="left:244px;width:200px;top:434.60px;transform:scaleX(0.964);transform-origin:100% 50%;color:#f0f0f0">3.75%</div>
<div class="a" style="left:449.9px;top:435.20px;width:10.4px;height:3.8px;background:#474747;border-radius:0.8px"></div>
<div class="a" style="left:453.5px;top:436.60px;width:3.2px;height:1px;background:#a0a0a0"></div>
<div class="a" style="left:454.59999999999997px;top:435.60px;width:1px;height:3px;background:#a0a0a0"></div>
<div class="a" style="left:449.9px;top:440.00px;width:10.4px;height:3.5px;background:#474747;border-radius:0.8px"></div>
<div class="a" style="left:453.5px;top:441.25px;width:3.2px;height:1px;background:#a0a0a0"></div>
<svg class="a" style="left:463.3px;top:434.4px" width="10" height="9" viewBox="0 0 10 9"><path d="M1.2 5.2 V3.8 A2 2 0 0 1 5.2 3.8 V4.2" fill="none" stroke="#ececec" stroke-width="0.9" opacity="0.9"/><rect x="3.5" y="3.9" width="5.4" height="4.3" fill="#ececec"/></svg>
<div class="sep" style="left:479.0px;top:433px;height:12px;background:#3c3c3c"></div>
<div class="t " style="left:485.5px;top:434.90px;color:#ddd">Date:</div>
<div class="a" style="left:506.9px;top:435px;width:83.7px;height:8.8px;background:#0c0c0c;border-radius:1px"></div>
<div class="t " style="left:511.9px;top:434.60px;transform:scaleX(0.952);transform-origin:0 50%;color:#f0f0f0">09/24/2024</div>
<svg class="a" style="left:565.4px;top:436.6px" width="8" height="7.4" viewBox="0 0 8 7.4"><rect x="0.5" y="0.5" width="7" height="6.4" rx="1" fill="none" stroke="#4a4a4a" stroke-width="0.9"/><line x1="0.5" y1="2.2" x2="7.5" y2="2.2" stroke="#4a4a4a" stroke-width="0.9"/><rect x="1.8" y="3.4" width="2" height="1.6" fill="#3a3a3a"/><rect x="4.6" y="3.4" width="1.6" height="1.6" fill="#333"/></svg>
<div class="a" style="left:580px;top:435.20px;width:10.4px;height:3.8px;background:#474747;border-radius:0.8px"></div>
<div class="a" style="left:583.6px;top:436.60px;width:3.2px;height:1px;background:#a0a0a0"></div>
<div class="a" style="left:584.7px;top:435.60px;width:1px;height:3px;background:#a0a0a0"></div>
<div class="a" style="left:580px;top:440.00px;width:10.4px;height:3.5px;background:#474747;border-radius:0.8px"></div>
<div class="a" style="left:583.6px;top:441.25px;width:3.2px;height:1px;background:#a0a0a0"></div>
<div class="sep" style="left:595.5px;top:433px;height:12px;background:#3c3c3c"></div>
<div class="a" style="left:0px;top:446px;width:1024px;height:12px;background:#1c1c1c;"></div>
<div class="a" style="left:0px;top:446px;width:14.4px;height:12px;background:#0a0a0a;"></div>
<div class="sep" style="left:14.5px;top:446px;height:11px;background:#343434"></div>
<div class="sep" style="left:24.5px;top:446px;height:11px;background:#343434"></div>
<div class="sep" style="left:46.0px;top:446px;height:11px;background:#343434"></div>
<div class="sep" style="left:136.5px;top:446px;height:11px;background:#343434"></div>
<div class="sep" style="left:204.5px;top:446px;height:11px;background:#343434"></div>
<div class="sep" style="left:286.5px;top:446px;height:11px;background:#343434"></div>
<div class="sep" style="left:366.0px;top:446px;height:11px;background:#343434"></div>
<div class="sep" style="left:441.0px;top:446px;height:11px;background:#343434"></div>
<div class="sep" style="left:510.0px;top:446px;height:11px;background:#343434"></div>
<div class="sep" style="left:577.5px;top:446px;height:11px;background:#343434"></div>
<div class="sep" style="left:641.0px;top:446px;height:11px;background:#343434"></div>
<div class="sep" style="left:654.5px;top:446px;height:11px;background:#343434"></div>
<div class="sep" style="left:723.5px;top:446px;height:11px;background:#343434"></div>
<div class="sep" style="left:791.0px;top:446px;height:11px;background:#343434"></div>
<div class="sep" style="left:854.5px;top:446px;height:11px;background:#343434"></div>
<div class="sep" style="left:868.5px;top:446px;height:11px;background:#343434"></div>
<div class="sep" style="left:937.5px;top:446px;height:11px;background:#343434"></div>
<div class="sep" style="left:1005.5px;top:446px;height:11px;background:#343434"></div>
<div class="sep" style="left:1016.0px;top:446px;height:11px;background:#343434"></div>
<div class="t " style="left:49px;top:447.00px;color:#7c7c7c">Spread</div>
<div class="t " style="left:139px;top:447.00px;color:#7c7c7c">Side</div>
<div class="t r " style="left:86px;width:200px;top:447.00px;color:#7c7c7c">Qty</div>
<div class="t " style="left:288.5px;top:447.00px;color:#7c7c7c">Symbol</div>
<div class="t r " style="left:240.5px;width:200px;top:447.00px;color:#7c7c7c">Exp</div>
<div class="t r " style="left:309.5px;width:200px;top:447.00px;color:#7c7c7c">Strike</div>
<div class="t " style="left:512px;top:447.00px;color:#7c7c7c">Type</div>
<div class="t r " style="left:440.5px;width:200px;top:447.00px;color:#7c7c7c">Price</div>
<div class="t r " style="left:523px;width:200px;top:447.00px;color:#7c7c7c">Yield</div>
<div class="t r " style="left:590.5px;width:200px;top:447.00px;color:#7c7c7c">Vol</div>
<div class="t r " style="left:654px;width:200px;top:447.00px;color:#7c7c7c">Vol Adj</div>
<div class="t r " style="left:737px;width:200px;top:447.00px;color:#7c7c7c">Delta</div>
<div class="t r " style="left:805px;width:200px;top:447.00px;color:#7c7c7c">BP Effect</div>
<div class="a" style="left:0px;top:458px;width:1024px;height:13.4px;background:#333333;"></div>
<svg class="a" style="left:3px;top:463.0px" width="6" height="4" viewBox="0 0 6 4"><path d="M0.7 0.7 L3 3 L5.3 0.7" fill="none" stroke="#e0e0e0" stroke-width="1.5"/></svg>
<svg class="a" style="left:16.6px;top:459.4px" width="10" height="9" viewBox="0 0 10 9"><rect x="0.5" y="2" width="6.5" height="6.5" rx="1.2" fill="#0a0a0a" stroke="#555" stroke-width="0.6"/><path d="M1.7 3.6 L3.6 6.8 L7.7 1.1" fill="none" stroke="#e8e8e8" stroke-width="1.2"/></svg>
<div class="t " style="left:30px;top:460.00px;transform:scaleX(0.85);transform-origin:0 50%;color:#f0f0f0">SPY</div>
<div class="sep" style="left:1002.0px;top:458px;height:12.5px;background:#2a2a2a"></div>
<svg class="a" style="left:1008px;top:459.7px" width="9" height="9" viewBox="0 0 9 9"><g stroke="#e4e4e4" stroke-width="1.25"><line x1="6.50" y1="4.50" x2="8.80" y2="4.50"/><line x1="5.91" y1="5.91" x2="7.54" y2="7.54"/><line x1="4.50" y1="6.50" x2="4.50" y2="8.80"/><line x1="3.09" y1="5.91" x2="1.46" y2="7.54"/><line x1="2.50" y1="4.50" x2="0.20" y2="4.50"/><line x1="3.09" y1="3.09" x2="1.46" y2="1.46"/><line x1="4.50" y1="2.50" x2="4.50" y2="0.20"/><line x1="5.91" y1="3.09" x2="7.54" y2="1.46"/></g><circle cx="4.5" cy="4.5" r="2.3" fill="none" stroke="#e4e4e4" stroke-width="1.5"/></svg>
<div class="a" style="left:0px;top:470.7px;width:1024px;height:131px;background:#0a0a0a;"></div>
<svg class="a" style="left:15.3px;top:471.5px" width="10" height="9" viewBox="0 0 10 9"><rect x="0.5" y="2" width="6.5" height="6.5" rx="1.2" fill="#0a0a0a" stroke="#555" stroke-width="0.6"/><path d="M1.7 3.6 L3.6 6.8 L7.7 1.1" fill="none" stroke="#e8e8e8" stroke-width="1.2"/></svg>
<svg class="a" style="left:32px;top:472.2px" width="9" height="7" viewBox="0 0 9 7"><path d="M0.3 6.2 L2.2 5.2 L4 4.3 L5 5.6 L6.4 3.4 L7.9 0.6" fill="none" stroke="#363636" stroke-width="0.8"/></svg>
<div class="t " style="left:49px;top:472.00px;transform:scaleX(0.85);transform-origin:0 50%;color:#f0f0f0">STK</div>
<div class="t r " style="left:85px;width:200px;top:472.00px;transform:scaleX(0.94);transform-origin:100% 50%;color:#f0f0f0">0</div>
<div class="t r " style="left:165px;width:200px;top:472.00px;transform:scaleX(0.85);transform-origin:100% 50%;color:#f0f0f0">SPY</div>
<div class="t " style="left:512px;top:472.00px;transform:scaleX(0.85);transform-origin:0 50%;color:#f0f0f0">STOCK</div>
<div class="t r " style="left:439.5px;width:200px;top:472.00px;transform:scaleX(0.96);transform-origin:100% 50%;color:#f0f0f0">.00</div>
<div class="t r " style="left:521.5px;width:200px;top:472.00px;transform:scaleX(0.964);transform-origin:100% 50%;color:#f0f0f0">1.23%</div>
<div class="t r " style="left:589.5px;width:200px;top:472.00px;transform:scaleX(0.9);transform-origin:100% 50%;color:#f0f0f0">N/A</div>
<div class="t r " style="left:653px;width:200px;top:472.00px;transform:scaleX(0.964);transform-origin:100% 50%;color:#f0f0f0">0.00%</div>
<div class="t r " style="left:736px;width:200px;top:472.00px;transform:scaleX(0.96);transform-origin:100% 50%;color:#f0f0f0">.00</div>
<div class="t r " style="left:803.5px;width:200px;top:472.00px;transform:scaleX(0.964);transform-origin:100% 50%;color:#f0f0f0">$0.00</div>
<div class="sep" style="left:24.5px;top:471px;height:11px;background:#1f1f1f"></div>
<div class="sep" style="left:46.0px;top:471px;height:11px;background:#1f1f1f"></div>
<div class="sep" style="left:136.5px;top:471px;height:11px;background:#1f1f1f"></div>
<div class="sep" style="left:204.5px;top:471px;height:11px;background:#1f1f1f"></div>
<div class="sep" style="left:286.5px;top:471px;height:11px;background:#1f1f1f"></div>
<div class="sep" style="left:366.0px;top:471px;height:11px;background:#1f1f1f"></div>
<div class="sep" style="left:441.0px;top:471px;height:11px;background:#1f1f1f"></div>
<div class="sep" style="left:510.0px;top:471px;height:11px;background:#1f1f1f"></div>
<div class="sep" style="left:577.5px;top:471px;height:11px;background:#1f1f1f"></div>
<div class="sep" style="left:641.0px;top:471px;height:11px;background:#1f1f1f"></div>
<div class="sep" style="left:654.5px;top:471px;height:11px;background:#1f1f1f"></div>
<div class="sep" style="left:723.5px;top:471px;height:11px;background:#1f1f1f"></div>
<div class="sep" style="left:791.0px;top:471px;height:11px;background:#1f1f1f"></div>
<div class="sep" style="left:854.5px;top:471px;height:11px;background:#1f1f1f"></div>
<div class="sep" style="left:868.5px;top:471px;height:11px;background:#1f1f1f"></div>
<div class="sep" style="left:937.5px;top:471px;height:11px;background:#1f1f1f"></div>
<div class="sep" style="left:1005.5px;top:471px;height:11px;background:#1f1f1f"></div>
<div class="sep" style="left:1016.0px;top:471px;height:11px;background:#1f1f1f"></div>
<div class="a" style="left:14.4px;top:482.0px;width:1008.6px;height:20.46px;background:#922d2e;"></div>
<div class="sep" style="left:24.5px;top:482.0px;height:20.46px;background:rgba(255,255,255,0.16)"></div>
<div class="sep" style="left:46.0px;top:482.0px;height:20.46px;background:rgba(255,255,255,0.16)"></div>
<div class="sep" style="left:136.5px;top:482.0px;height:20.46px;background:rgba(255,255,255,0.16)"></div>
<div class="sep" style="left:204.5px;top:482.0px;height:20.46px;background:rgba(255,255,255,0.16)"></div>
<div class="sep" style="left:286.5px;top:482.0px;height:20.46px;background:rgba(255,255,255,0.16)"></div>
<div class="sep" style="left:366.0px;top:482.0px;height:20.46px;background:rgba(255,255,255,0.16)"></div>
<div class="sep" style="left:441.0px;top:482.0px;height:20.46px;background:rgba(255,255,255,0.16)"></div>
<div class="sep" style="left:510.0px;top:482.0px;height:20.46px;background:rgba(255,255,255,0.16)"></div>
<div class="sep" style="left:577.5px;top:482.0px;height:20.46px;background:rgba(255,255,255,0.16)"></div>
<div class="sep" style="left:641.0px;top:482.0px;height:20.46px;background:rgba(255,255,255,0.16)"></div>
<div class="sep" style="left:654.5px;top:482.0px;height:20.46px;background:rgba(255,255,255,0.16)"></div>
<div class="sep" style="left:723.5px;top:482.0px;height:20.46px;background:rgba(255,255,255,0.16)"></div>
<div class="sep" style="left:791.0px;top:482.0px;height:20.46px;background:rgba(255,255,255,0.16)"></div>
<div class="sep" style="left:854.5px;top:482.0px;height:20.46px;background:rgba(255,255,255,0.16)"></div>
<div class="sep" style="left:868.5px;top:482.0px;height:20.46px;background:rgba(255,255,255,0.16)"></div>
<div class="sep" style="left:937.5px;top:482.0px;height:20.46px;background:rgba(255,255,255,0.16)"></div>
<div class="sep" style="left:1005.5px;top:482.0px;height:20.46px;background:rgba(255,255,255,0.16)"></div>
<div class="sep" style="left:1016.0px;top:482.0px;height:20.46px;background:rgba(255,255,255,0.16)"></div>
<svg class="a" style="left:15.3px;top:481.5px" width="10" height="9" viewBox="0 0 10 9"><rect x="0.5" y="2" width="6.5" height="6.5" rx="1.2" fill="#0a0a0a" stroke="#555" stroke-width="0.6"/><path d="M1.7 3.6 L3.6 6.8 L7.7 1.1" fill="none" stroke="#e8e8e8" stroke-width="1.2"/></svg>
<svg class="a" style="left:32px;top:482.2px" width="9" height="7" viewBox="0 0 9 7"><path d="M0.3 6.2 L2.2 5.2 L4 4.3 L5 5.6 L6.4 3.4 L7.9 0.6" fill="none" stroke="#ad4a4b" stroke-width="0.8"/></svg>
<div class="a" style="left:47.5px;top:483.0px;width:89px;height:7.7px;background:#5a1f1f;"></div>
<div class="t " style="left:49px;top:481.75px;transform:scaleX(0.85);transform-origin:0 50%;color:#f4dede">VERTICAL</div>
<div class="tri" style="left:133px;top:488.2px;border-bottom-color:#ddd"></div>
<div class="a" style="left:138px;top:483.0px;width:66.5px;height:7.7px;background:#5a1f1f;"></div>
<div class="t " style="left:139px;top:481.75px;transform:scaleX(0.85);transform-origin:0 50%;color:#f4dede">SELL</div>
<div class="tri" style="left:201px;top:488.2px;border-bottom-color:#ddd"></div>
<div class="t " style="left:139px;top:491.95px;transform:scaleX(0.85);transform-origin:0 50%;color:#f4dede">BUY</div>
<div class="a" style="left:206px;top:483.0px;width:57px;height:7.7px;background:#5a1f1f;"></div>
<div class="t r " style="left:57.5px;width:200px;top:481.75px;transform:scaleX(0.97);transform-origin:100% 50%;color:#f4dede">-1</div>
<div class="a" style="left:264.2px;top:482.6px;width:10.2px;height:4px;background:#a03536"></div><div class="a" style="left:264.2px;top:487.20000000000005px;width:10.2px;height:4px;background:#a03536"></div>
<div class="a" style="left:267.50px;top:484.1px;width:3.6px;height:1.2px;background:#fff"></div><div class="a" style="left:268.70px;top:482.90000000000003px;width:1.2px;height:3.6px;background:#fff"></div><div class="a" style="left:267.40px;top:488.6px;width:3.8px;height:1.3px;background:#fff"></div>
<div class="a" style="left:276px;top:482.6px;width:10.5px;height:8.6px;background:#a03536"></div>
<div class="a" style="left:277.8px;top:485.4px;width:0;height:0;border-left:2.7px solid transparent;border-right:2.7px solid transparent;border-top:2.9px solid #fff"></div>
<div class="t r " style="left:63.30000000000001px;width:200px;top:491.95px;transform:scaleX(0.97);transform-origin:100% 50%;color:#f4dede">+1</div>
<div class="t r " style="left:165px;width:200px;top:481.75px;transform:scaleX(0.85);transform-origin:100% 50%;color:#f4dede">SPY</div>
<div class="t r " style="left:165px;width:200px;top:491.95px;transform:scaleX(0.85);transform-origin:100% 50%;color:#f4dede">SPY</div>
<div class="a" style="left:367.5px;top:483.0px;width:73.5px;height:7.7px;background:#5a1f1f;"></div>
<div class="t " style="left:369px;top:481.75px;transform:scaleX(0.901);transform-origin:0 50%;color:#f4dede">18 OCT 24</div>
<div class="tri" style="left:437.5px;top:488.2px;border-bottom-color:#ddd"></div>
<div class="t " style="left:369px;top:491.95px;transform:scaleX(0.901);transform-origin:0 50%;color:#f4dede">18 OCT 24</div>
<div class="a" style="left:442.5px;top:483.0px;width:67px;height:7.7px;background:#5a1f1f;"></div>
<div class="t " style="left:443.5px;top:481.75px;transform:scaleX(0.94);transform-origin:0 50%;color:#f4dede">551</div>
<div class="tri" style="left:506.5px;top:488.2px;border-bottom-color:#ddd"></div>
<div class="a" style="left:442.5px;top:493.1px;width:67px;height:7.7px;background:#5a1f1f;"></div>
<div class="t " style="left:443.5px;top:491.95px;transform:scaleX(0.94);transform-origin:0 50%;color:#f4dede">550</div>
<div class="tri" style="left:506.5px;top:498.3px;border-bottom-color:#ddd"></div>
<div class="a" style="left:511.5px;top:483.0px;width:66px;height:7.7px;background:#5a1f1f;"></div>
<div class="t " style="left:512px;top:481.75px;transform:scaleX(0.85);transform-origin:0 50%;color:#f4dede">PUT</div>
<div class="tri" style="left:574px;top:488.2px;border-bottom-color:#ddd"></div>
<div class="t " style="left:512px;top:491.95px;transform:scaleX(0.85);transform-origin:0 50%;color:#f4dede">PUT</div>
<div class="a" style="left:579px;top:483.0px;width:49px;height:7.7px;background:#5a1f1f;"></div>
<div class="t r " style="left:422.5px;width:200px;top:481.75px;transform:scaleX(0.96);transform-origin:100% 50%;color:#f4dede">.35</div>
<div class="a" style="left:628.2px;top:482.6px;width:10.8px;height:4px;background:#a03536"></div><div class="a" style="left:628.2px;top:487.20000000000005px;width:10.8px;height:4px;background:#a03536"></div>
<div class="a" style="left:631.80px;top:484.1px;width:3.6px;height:1.2px;background:#fff"></div><div class="a" style="left:633.00px;top:482.90000000000003px;width:1.2px;height:3.6px;background:#fff"></div><div class="a" style="left:631.70px;top:488.6px;width:3.8px;height:1.3px;background:#fff"></div>
<div class="t c " style="left:509px;width:200px;top:491.95px;transform:scaleX(0.85);transform-origin:50% 50%;color:#f4dede">CREDIT</div>
<svg class="a" style="left:643.7px;top:482.3px" width="8" height="9" viewBox="0 0 8 9"><path d="M2.2 4.2 V2.7 A1.5 1.5 0 0 1 5.2 2.7 V4.2" fill="none" stroke="#f0e4e4" stroke-width="1"/><rect x="1.2" y="4" width="5" height="3.8" fill="#f0e4e4"/></svg>
<div class="t r " style="left:521.5px;width:200px;top:481.75px;transform:scaleX(0.964);transform-origin:100% 50%;color:#f4dede">0.00%</div>
<div class="t r " style="left:521.5px;width:200px;top:491.95px;transform:scaleX(0.964);transform-origin:100% 50%;color:#f4dede">0.00%</div>
<div class="t r " style="left:589.5px;width:200px;top:481.75px;transform:scaleX(0.96);transform-origin:100% 50%;color:#f4dede">18.28%</div>
<div class="t r " style="left:589.5px;width:200px;top:491.95px;transform:scaleX(0.96);transform-origin:100% 50%;color:#f4dede">18.50%</div>
<div class="a" style="left:792.5px;top:483.0px;width:49.5px;height:7.7px;background:#5a1f1f;"></div>
<div class="t r " style="left:636px;width:200px;top:482.05px;transform:scaleX(0.964);transform-origin:100% 50%;color:#f4dede">0.00%</div>
<div class="a" style="left:842.5px;top:482.6px;width:10.6px;height:4px;background:#a03536"></div><div class="a" style="left:842.5px;top:487.20000000000005px;width:10.6px;height:4px;background:#a03536"></div>
<div class="a" style="left:846.00px;top:484.1px;width:3.6px;height:1.2px;background:#fff"></div><div class="a" style="left:847.20px;top:482.90000000000003px;width:1.2px;height:3.6px;background:#fff"></div><div class="a" style="left:845.90px;top:488.6px;width:3.8px;height:1.3px;background:#fff"></div>
<svg class="a" style="left:856.2px;top:482.2px" width="9" height="9" viewBox="0 0 9 9"><path d="M0.9 4.4 V2.9 A1.45 1.45 0 0 1 3.8 2.9 V4" fill="none" stroke="#f0e4e4" stroke-width="1"/><rect x="2.5" y="3.8" width="5.3" height="4" fill="#f0e4e4"/></svg>
<div class="a" style="left:792.5px;top:493.1px;width:49.5px;height:7.7px;background:#5a1f1f;"></div>
<div class="t r " style="left:636px;width:200px;top:492.25px;transform:scaleX(0.964);transform-origin:100% 50%;color:#f4dede">0.00%</div>
<div class="a" style="left:842.5px;top:492.70000000000005px;width:10.6px;height:4px;background:#a03536"></div><div class="a" style="left:842.5px;top:497.30000000000007px;width:10.6px;height:4px;background:#a03536"></div>
<div class="a" style="left:846.00px;top:494.20000000000005px;width:3.6px;height:1.2px;background:#fff"></div><div class="a" style="left:847.20px;top:493.00000000000006px;width:1.2px;height:3.6px;background:#fff"></div><div class="a" style="left:845.90px;top:498.70000000000005px;width:3.8px;height:1.3px;background:#fff"></div>
<svg class="a" style="left:856.2px;top:492.3px" width="9" height="9" viewBox="0 0 9 9"><path d="M0.9 4.4 V2.9 A1.45 1.45 0 0 1 3.8 2.9 V4" fill="none" stroke="#f0e4e4" stroke-width="1"/><rect x="2.5" y="3.8" width="5.3" height="4" fill="#f0e4e4"/></svg>
<div class="t r " style="left:736px;width:200px;top:481.75px;transform:scaleX(0.96);transform-origin:100% 50%;color:#f4dede">.99</div>
<div class="t r " style="left:804px;width:200px;top:481.75px;color:#f4dede">-</div>
<div class="t r " style="left:804px;width:200px;top:491.95px;color:#f4dede">-</div>
<svg class="a" style="left:1007.5px;top:484.0px" width="6" height="6" viewBox="0 0 6 6"><path d="M0.8 0.8 L5.2 5.2 M5.2 0.8 L0.8 5.2" stroke="#f2f2f2" stroke-width="1.3"/></svg>
<div class="a" style="left:14.4px;top:502.46px;width:1008.6px;height:20.46px;background:#075834;"></div>
<div class="sep" style="left:24.5px;top:502.46px;height:20.46px;background:rgba(255,255,255,0.16)"></div>
<div class="sep" style="left:46.0px;top:502.46px;height:20.46px;background:rgba(255,255,255,0.16)"></div>
<div class="sep" style="left:136.5px;top:502.46px;height:20.46px;background:rgba(255,255,255,0.16)"></div>
<div class="sep" style="left:204.5px;top:502.46px;height:20.46px;background:rgba(255,255,255,0.16)"></div>
<div class="sep" style="left:286.5px;top:502.46px;height:20.46px;background:rgba(255,255,255,0.16)"></div>
<div class="sep" style="left:366.0px;top:502.46px;height:20.46px;background:rgba(255,255,255,0.16)"></div>
<div class="sep" style="left:441.0px;top:502.46px;height:20.46px;background:rgba(255,255,255,0.16)"></div>
<div class="sep" style="left:510.0px;top:502.46px;height:20.46px;background:rgba(255,255,255,0.16)"></div>
<div class="sep" style="left:577.5px;top:502.46px;height:20.46px;background:rgba(255,255,255,0.16)"></div>
<div class="sep" style="left:641.0px;top:502.46px;height:20.46px;background:rgba(255,255,255,0.16)"></div>
<div class="sep" style="left:654.5px;top:502.46px;height:20.46px;background:rgba(255,255,255,0.16)"></div>
<div class="sep" style="left:723.5px;top:502.46px;height:20.46px;background:rgba(255,255,255,0.16)"></div>
<div class="sep" style="left:791.0px;top:502.46px;height:20.46px;background:rgba(255,255,255,0.16)"></div>
<div class="sep" style="left:854.5px;top:502.46px;height:20.46px;background:rgba(255,255,255,0.16)"></div>
<div class="sep" style="left:868.5px;top:502.46px;height:20.46px;background:rgba(255,255,255,0.16)"></div>
<div class="sep" style="left:937.5px;top:502.46px;height:20.46px;background:rgba(255,255,255,0.16)"></div>
<div class="sep" style="left:1005.5px;top:502.46px;height:20.46px;background:rgba(255,255,255,0.16)"></div>
<div class="sep" style="left:1016.0px;top:502.46px;height:20.46px;background:rgba(255,255,255,0.16)"></div>
<svg class="a" style="left:15.3px;top:501.96px" width="10" height="9" viewBox="0 0 10 9"><rect x="0.5" y="2" width="6.5" height="6.5" rx="1.2" fill="#0a0a0a" stroke="#555" stroke-width="0.6"/><path d="M1.7 3.6 L3.6 6.8 L7.7 1.1" fill="none" stroke="#e8e8e8" stroke-width="1.2"/></svg>
<svg class="a" style="left:32px;top:502.65999999999997px" width="9" height="7" viewBox="0 0 9 7"><path d="M0.3 6.2 L2.2 5.2 L4 4.3 L5 5.6 L6.4 3.4 L7.9 0.6" fill="none" stroke="#1f7a50" stroke-width="0.8"/></svg>
<div class="a" style="left:47.5px;top:503.46px;width:89px;height:7.7px;background:#083822;"></div>
<div class="t " style="left:49px;top:502.21px;transform:scaleX(0.85);transform-origin:0 50%;color:#d8f0e4">VERTICAL</div>
<div class="tri" style="left:133px;top:508.65999999999997px;border-bottom-color:#ddd"></div>
<div class="a" style="left:138px;top:503.46px;width:66.5px;height:7.7px;background:#083822;"></div>
<div class="t " style="left:139px;top:502.21px;transform:scaleX(0.85);transform-origin:0 50%;color:#d8f0e4">BUY</div>
<div class="tri" style="left:201px;top:508.65999999999997px;border-bottom-color:#ddd"></div>
<div class="t " style="left:139px;top:512.41px;transform:scaleX(0.85);transform-origin:0 50%;color:#d8f0e4">SELL</div>
<div class="a" style="left:206px;top:503.46px;width:57px;height:7.7px;background:#083822;"></div>
<div class="t r " style="left:57.5px;width:200px;top:502.21px;transform:scaleX(0.97);transform-origin:100% 50%;color:#d8f0e4">+1</div>
<div class="a" style="left:264.2px;top:503.06px;width:10.2px;height:4px;background:#0d6a40"></div><div class="a" style="left:264.2px;top:507.66px;width:10.2px;height:4px;background:#0d6a40"></div>
<div class="a" style="left:267.50px;top:504.56px;width:3.6px;height:1.2px;background:#fff"></div><div class="a" style="left:268.70px;top:503.36px;width:1.2px;height:3.6px;background:#fff"></div><div class="a" style="left:267.40px;top:509.06px;width:3.8px;height:1.3px;background:#fff"></div>
<div class="a" style="left:276px;top:503.06px;width:10.5px;height:8.6px;background:#0d6a40"></div>
<div class="a" style="left:277.8px;top:505.85999999999996px;width:0;height:0;border-left:2.7px solid transparent;border-right:2.7px solid transparent;border-top:2.9px solid #fff"></div>
<div class="t r " style="left:63.30000000000001px;width:200px;top:512.41px;transform:scaleX(0.97);transform-origin:100% 50%;color:#d8f0e4">-1</div>
<div class="t r " style="left:165px;width:200px;top:502.21px;transform:scaleX(0.85);transform-origin:100% 50%;color:#d8f0e4">SPY</div>
<div class="t r " style="left:165px;width:200px;top:512.41px;transform:scaleX(0.85);transform-origin:100% 50%;color:#d8f0e4">SPY</div>
<div class="a" style="left:367.5px;top:503.46px;width:73.5px;height:7.7px;background:#083822;"></div>
<div class="t " style="left:369px;top:502.21px;transform:scaleX(0.901);transform-origin:0 50%;color:#d8f0e4">18 OCT 24</div>
<div class="tri" style="left:437.5px;top:508.65999999999997px;border-bottom-color:#ddd"></div>
<div class="t " style="left:369px;top:512.41px;transform:scaleX(0.901);transform-origin:0 50%;color:#d8f0e4">18 OCT 24</div>
<div class="a" style="left:442.5px;top:503.46px;width:67px;height:7.7px;background:#083822;"></div>
<div class="t " style="left:443.5px;top:502.21px;transform:scaleX(0.94);transform-origin:0 50%;color:#d8f0e4">551</div>
<div class="tri" style="left:506.5px;top:508.65999999999997px;border-bottom-color:#ddd"></div>
<div class="a" style="left:442.5px;top:513.56px;width:67px;height:7.7px;background:#083822;"></div>
<div class="t " style="left:443.5px;top:512.41px;transform:scaleX(0.94);transform-origin:0 50%;color:#d8f0e4">550</div>
<div class="tri" style="left:506.5px;top:518.76px;border-bottom-color:#ddd"></div>
<div class="a" style="left:511.5px;top:503.46px;width:66px;height:7.7px;background:#083822;"></div>
<div class="t " style="left:512px;top:502.21px;transform:scaleX(0.85);transform-origin:0 50%;color:#d8f0e4">PUT</div>
<div class="tri" style="left:574px;top:508.65999999999997px;border-bottom-color:#ddd"></div>
<div class="t " style="left:512px;top:512.41px;transform:scaleX(0.85);transform-origin:0 50%;color:#d8f0e4">PUT</div>
<div class="a" style="left:579px;top:503.46px;width:49px;height:7.7px;background:#083822;"></div>
<div class="t r " style="left:422.5px;width:200px;top:502.21px;transform:scaleX(0.96);transform-origin:100% 50%;color:#d8f0e4">.22</div>
<div class="a" style="left:628.2px;top:503.06px;width:10.8px;height:4px;background:#0d6a40"></div><div class="a" style="left:628.2px;top:507.66px;width:10.8px;height:4px;background:#0d6a40"></div>
<div class="a" style="left:631.80px;top:504.56px;width:3.6px;height:1.2px;background:#fff"></div><div class="a" style="left:633.00px;top:503.36px;width:1.2px;height:3.6px;background:#fff"></div><div class="a" style="left:631.70px;top:509.06px;width:3.8px;height:1.3px;background:#fff"></div>
<div class="t c " style="left:509px;width:200px;top:512.41px;transform:scaleX(0.85);transform-origin:50% 50%;color:#d8f0e4">DEBIT</div>
<svg class="a" style="left:643.7px;top:502.76px" width="8" height="9" viewBox="0 0 8 9"><path d="M2.2 4.2 V2.7 A1.5 1.5 0 0 1 5.2 2.7 V4.2" fill="none" stroke="#f0e4e4" stroke-width="1"/><rect x="1.2" y="4" width="5" height="3.8" fill="#f0e4e4"/></svg>
<div class="t r " style="left:521.5px;width:200px;top:502.21px;transform:scaleX(0.964);transform-origin:100% 50%;color:#d8f0e4">0.00%</div>
<div class="t r " style="left:521.5px;width:200px;top:512.41px;transform:scaleX(0.964);transform-origin:100% 50%;color:#d8f0e4">0.00%</div>
<div class="t r " style="left:589.5px;width:200px;top:502.21px;transform:scaleX(0.96);transform-origin:100% 50%;color:#d8f0e4">18.28%</div>
<div class="t r " style="left:589.5px;width:200px;top:512.41px;transform:scaleX(0.96);transform-origin:100% 50%;color:#d8f0e4">18.50%</div>
<div class="a" style="left:792.5px;top:503.46px;width:49.5px;height:7.7px;background:#083822;"></div>
<div class="t r " style="left:636px;width:200px;top:502.51px;transform:scaleX(0.964);transform-origin:100% 50%;color:#d8f0e4">0.00%</div>
<div class="a" style="left:842.5px;top:503.06px;width:10.6px;height:4px;background:#0d6a40"></div><div class="a" style="left:842.5px;top:507.66px;width:10.6px;height:4px;background:#0d6a40"></div>
<div class="a" style="left:846.00px;top:504.56px;width:3.6px;height:1.2px;background:#fff"></div><div class="a" style="left:847.20px;top:503.36px;width:1.2px;height:3.6px;background:#fff"></div><div class="a" style="left:845.90px;top:509.06px;width:3.8px;height:1.3px;background:#fff"></div>
<svg class="a" style="left:856.2px;top:502.65999999999997px" width="9" height="9" viewBox="0 0 9 9"><path d="M0.9 4.4 V2.9 A1.45 1.45 0 0 1 3.8 2.9 V4" fill="none" stroke="#f0e4e4" stroke-width="1"/><rect x="2.5" y="3.8" width="5.3" height="4" fill="#f0e4e4"/></svg>
<div class="a" style="left:792.5px;top:513.56px;width:49.5px;height:7.7px;background:#083822;"></div>
<div class="t r " style="left:636px;width:200px;top:512.71px;transform:scaleX(0.964);transform-origin:100% 50%;color:#d8f0e4">0.00%</div>
<div class="a" style="left:842.5px;top:513.16px;width:10.6px;height:4px;background:#0d6a40"></div><div class="a" style="left:842.5px;top:517.76px;width:10.6px;height:4px;background:#0d6a40"></div>
<div class="a" style="left:846.00px;top:514.66px;width:3.6px;height:1.2px;background:#fff"></div><div class="a" style="left:847.20px;top:513.4599999999999px;width:1.2px;height:3.6px;background:#fff"></div><div class="a" style="left:845.90px;top:519.16px;width:3.8px;height:1.3px;background:#fff"></div>
<svg class="a" style="left:856.2px;top:512.76px" width="9" height="9" viewBox="0 0 9 9"><path d="M0.9 4.4 V2.9 A1.45 1.45 0 0 1 3.8 2.9 V4" fill="none" stroke="#f0e4e4" stroke-width="1"/><rect x="2.5" y="3.8" width="5.3" height="4" fill="#f0e4e4"/></svg>
<div class="t r " style="left:736px;width:200px;top:502.21px;transform:scaleX(0.97);transform-origin:100% 50%;color:#d8f0e4">-.99</div>
<div class="t r " style="left:804px;width:200px;top:502.21px;color:#d8f0e4">-</div>
<div class="t r " style="left:804px;width:200px;top:512.41px;color:#d8f0e4">-</div>
<svg class="a" style="left:1007.5px;top:504.46px" width="6" height="6" viewBox="0 0 6 6"><path d="M0.8 0.8 L5.2 5.2 M5.2 0.8 L0.8 5.2" stroke="#f2f2f2" stroke-width="1.3"/></svg>
<div class="a" style="left:14.4px;top:522.92px;width:1008.6px;height:20.46px;background:#922d2e;"></div>
<div class="sep" style="left:24.5px;top:522.92px;height:20.46px;background:rgba(255,255,255,0.16)"></div>
<div class="sep" style="left:46.0px;top:522.92px;height:20.46px;background:rgba(255,255,255,0.16)"></div>
<div class="sep" style="left:136.5px;top:522.92px;height:20.46px;background:rgba(255,255,255,0.16)"></div>
<div class="sep" style="left:204.5px;top:522.92px;height:20.46px;background:rgba(255,255,255,0.16)"></div>
<div class="sep" style="left:286.5px;top:522.92px;height:20.46px;background:rgba(255,255,255,0.16)"></div>
<div class="sep" style="left:366.0px;top:522.92px;height:20.46px;background:rgba(255,255,255,0.16)"></div>
<div class="sep" style="left:441.0px;top:522.92px;height:20.46px;background:rgba(255,255,255,0.16)"></div>
<div class="sep" style="left:510.0px;top:522.92px;height:20.46px;background:rgba(255,255,255,0.16)"></div>
<div class="sep" style="left:577.5px;top:522.92px;height:20.46px;background:rgba(255,255,255,0.16)"></div>
<div class="sep" style="left:641.0px;top:522.92px;height:20.46px;background:rgba(255,255,255,0.16)"></div>
<div class="sep" style="left:654.5px;top:522.92px;height:20.46px;background:rgba(255,255,255,0.16)"></div>
<div class="sep" style="left:723.5px;top:522.92px;height:20.46px;background:rgba(255,255,255,0.16)"></div>
<div class="sep" style="left:791.0px;top:522.92px;height:20.46px;background:rgba(255,255,255,0.16)"></div>
<div class="sep" style="left:854.5px;top:522.92px;height:20.46px;background:rgba(255,255,255,0.16)"></div>
<div class="sep" style="left:868.5px;top:522.92px;height:20.46px;background:rgba(255,255,255,0.16)"></div>
<div class="sep" style="left:937.5px;top:522.92px;height:20.46px;background:rgba(255,255,255,0.16)"></div>
<div class="sep" style="left:1005.5px;top:522.92px;height:20.46px;background:rgba(255,255,255,0.16)"></div>
<div class="sep" style="left:1016.0px;top:522.92px;height:20.46px;background:rgba(255,255,255,0.16)"></div>
<svg class="a" style="left:15.3px;top:522.42px" width="10" height="9" viewBox="0 0 10 9"><rect x="0.5" y="2" width="6.5" height="6.5" rx="1.2" fill="#0a0a0a" stroke="#555" stroke-width="0.6"/><path d="M1.7 3.6 L3.6 6.8 L7.7 1.1" fill="none" stroke="#e8e8e8" stroke-width="1.2"/></svg>
<svg class="a" style="left:32px;top:523.12px" width="9" height="7" viewBox="0 0 9 7"><path d="M0.3 6.2 L2.2 5.2 L4 4.3 L5 5.6 L6.4 3.4 L7.9 0.6" fill="none" stroke="#ad4a4b" stroke-width="0.8"/></svg>
<div class="a" style="left:47.5px;top:523.92px;width:89px;height:7.7px;background:#5a1f1f;"></div>
<div class="t " style="left:49px;top:522.67px;transform:scaleX(0.85);transform-origin:0 50%;color:#f4dede">VERTICAL</div>
<div class="tri" style="left:133px;top:529.12px;border-bottom-color:#ddd"></div>
<div class="a" style="left:138px;top:523.92px;width:66.5px;height:7.7px;background:#5a1f1f;"></div>
<div class="t " style="left:139px;top:522.67px;transform:scaleX(0.85);transform-origin:0 50%;color:#f4dede">SELL</div>
<div class="tri" style="left:201px;top:529.12px;border-bottom-color:#ddd"></div>
<div class="t " style="left:139px;top:532.87px;transform:scaleX(0.85);transform-origin:0 50%;color:#f4dede">BUY</div>
<div class="a" style="left:206px;top:523.92px;width:57px;height:7.7px;background:#5a1f1f;"></div>
<div class="t r " style="left:57.5px;width:200px;top:522.67px;transform:scaleX(0.97);transform-origin:100% 50%;color:#f4dede">-1</div>
<div class="a" style="left:264.2px;top:523.52px;width:10.2px;height:4px;background:#a03536"></div><div class="a" style="left:264.2px;top:528.12px;width:10.2px;height:4px;background:#a03536"></div>
<div class="a" style="left:267.50px;top:525.02px;width:3.6px;height:1.2px;background:#fff"></div><div class="a" style="left:268.70px;top:523.8199999999999px;width:1.2px;height:3.6px;background:#fff"></div><div class="a" style="left:267.40px;top:529.52px;width:3.8px;height:1.3px;background:#fff"></div>
<div class="a" style="left:276px;top:523.52px;width:10.5px;height:8.6px;background:#a03536"></div>
<div class="a" style="left:277.8px;top:526.3199999999999px;width:0;height:0;border-left:2.7px solid transparent;border-right:2.7px solid transparent;border-top:2.9px solid #fff"></div>
<div class="t r " style="left:63.30000000000001px;width:200px;top:532.87px;transform:scaleX(0.97);transform-origin:100% 50%;color:#f4dede">+1</div>
<div class="t r " style="left:165px;width:200px;top:522.67px;transform:scaleX(0.85);transform-origin:100% 50%;color:#f4dede">SPY</div>
<div class="t r " style="left:165px;width:200px;top:532.87px;transform:scaleX(0.85);transform-origin:100% 50%;color:#f4dede">SPY</div>
<div class="a" style="left:367.5px;top:523.92px;width:73.5px;height:7.7px;background:#5a1f1f;"></div>
<div class="t " style="left:369px;top:522.67px;transform:scaleX(0.901);transform-origin:0 50%;color:#f4dede">18 OCT 24</div>
<div class="tri" style="left:437.5px;top:529.12px;border-bottom-color:#ddd"></div>
<div class="t " style="left:369px;top:532.87px;transform:scaleX(0.901);transform-origin:0 50%;color:#f4dede">18 OCT 24</div>
<div class="a" style="left:442.5px;top:523.92px;width:67px;height:7.7px;background:#5a1f1f;"></div>
<div class="t " style="left:443.5px;top:522.67px;transform:scaleX(0.94);transform-origin:0 50%;color:#f4dede">562</div>
<div class="tri" style="left:506.5px;top:529.12px;border-bottom-color:#ddd"></div>
<div class="a" style="left:442.5px;top:534.02px;width:67px;height:7.7px;background:#5a1f1f;"></div>
<div class="t " style="left:443.5px;top:532.87px;transform:scaleX(0.94);transform-origin:0 50%;color:#f4dede">561</div>
<div class="tri" style="left:506.5px;top:539.2199999999999px;border-bottom-color:#ddd"></div>
<div class="a" style="left:511.5px;top:523.92px;width:66px;height:7.7px;background:#5a1f1f;"></div>
<div class="t " style="left:512px;top:522.67px;transform:scaleX(0.85);transform-origin:0 50%;color:#f4dede">PUT</div>
<div class="tri" style="left:574px;top:529.12px;border-bottom-color:#ddd"></div>
<div class="t " style="left:512px;top:532.87px;transform:scaleX(0.85);transform-origin:0 50%;color:#f4dede">PUT</div>
<div class="a" style="left:579px;top:523.92px;width:49px;height:7.7px;background:#5a1f1f;"></div>
<div class="t r " style="left:422.5px;width:200px;top:522.67px;transform:scaleX(0.96);transform-origin:100% 50%;color:#f4dede">.37</div>
<div class="a" style="left:628.2px;top:523.52px;width:10.8px;height:4px;background:#a03536"></div><div class="a" style="left:628.2px;top:528.12px;width:10.8px;height:4px;background:#a03536"></div>
<div class="a" style="left:631.80px;top:525.02px;width:3.6px;height:1.2px;background:#fff"></div><div class="a" style="left:633.00px;top:523.8199999999999px;width:1.2px;height:3.6px;background:#fff"></div><div class="a" style="left:631.70px;top:529.52px;width:3.8px;height:1.3px;background:#fff"></div>
<div class="t c " style="left:509px;width:200px;top:532.87px;transform:scaleX(0.85);transform-origin:50% 50%;color:#f4dede">CREDIT</div>
<svg class="a" style="left:643.7px;top:523.2199999999999px" width="8" height="9" viewBox="0 0 8 9"><path d="M2.2 4.2 V2.7 A1.5 1.5 0 0 1 5.2 2.7 V4.2" fill="none" stroke="#f0e4e4" stroke-width="1"/><rect x="1.2" y="4" width="5" height="3.8" fill="#f0e4e4"/></svg>
<div class="t r " style="left:521.5px;width:200px;top:522.67px;transform:scaleX(0.964);transform-origin:100% 50%;color:#f4dede">0.00%</div>
<div class="t r " style="left:521.5px;width:200px;top:532.87px;transform:scaleX(0.964);transform-origin:100% 50%;color:#f4dede">0.00%</div>
<div class="t r " style="left:589.5px;width:200px;top:522.67px;transform:scaleX(0.96);transform-origin:100% 50%;color:#f4dede">15.56%</div>
<div class="t r " style="left:589.5px;width:200px;top:532.87px;transform:scaleX(0.96);transform-origin:100% 50%;color:#f4dede">15.84%</div>
<div class="a" style="left:792.5px;top:523.92px;width:49.5px;height:7.7px;background:#5a1f1f;"></div>
<div class="t r " style="left:636px;width:200px;top:522.97px;transform:scaleX(0.964);transform-origin:100% 50%;color:#f4dede">0.00%</div>
<div class="a" style="left:842.5px;top:523.52px;width:10.6px;height:4px;background:#a03536"></div><div class="a" style="left:842.5px;top:528.12px;width:10.6px;height:4px;background:#a03536"></div>
<div class="a" style="left:846.00px;top:525.02px;width:3.6px;height:1.2px;background:#fff"></div><div class="a" style="left:847.20px;top:523.8199999999999px;width:1.2px;height:3.6px;background:#fff"></div><div class="a" style="left:845.90px;top:529.52px;width:3.8px;height:1.3px;background:#fff"></div>
<svg class="a" style="left:856.2px;top:523.12px" width="9" height="9" viewBox="0 0 9 9"><path d="M0.9 4.4 V2.9 A1.45 1.45 0 0 1 3.8 2.9 V4" fill="none" stroke="#f0e4e4" stroke-width="1"/><rect x="2.5" y="3.8" width="5.3" height="4" fill="#f0e4e4"/></svg>
<div class="a" style="left:792.5px;top:534.02px;width:49.5px;height:7.7px;background:#5a1f1f;"></div>
<div class="t r " style="left:636px;width:200px;top:533.17px;transform:scaleX(0.964);transform-origin:100% 50%;color:#f4dede">0.00%</div>
<div class="a" style="left:842.5px;top:533.62px;width:10.6px;height:4px;background:#a03536"></div><div class="a" style="left:842.5px;top:538.22px;width:10.6px;height:4px;background:#a03536"></div>
<div class="a" style="left:846.00px;top:535.12px;width:3.6px;height:1.2px;background:#fff"></div><div class="a" style="left:847.20px;top:533.92px;width:1.2px;height:3.6px;background:#fff"></div><div class="a" style="left:845.90px;top:539.62px;width:3.8px;height:1.3px;background:#fff"></div>
<svg class="a" style="left:856.2px;top:533.22px" width="9" height="9" viewBox="0 0 9 9"><path d="M0.9 4.4 V2.9 A1.45 1.45 0 0 1 3.8 2.9 V4" fill="none" stroke="#f0e4e4" stroke-width="1"/><rect x="2.5" y="3.8" width="5.3" height="4" fill="#f0e4e4"/></svg>
<div class="t r " style="left:736px;width:200px;top:522.67px;transform:scaleX(0.955);transform-origin:100% 50%;color:#f4dede">1.66</div>
<div class="t r " style="left:804px;width:200px;top:522.67px;color:#f4dede">-</div>
<div class="t r " style="left:804px;width:200px;top:532.87px;color:#f4dede">-</div>
<svg class="a" style="left:1007.5px;top:524.92px" width="6" height="6" viewBox="0 0 6 6"><path d="M0.8 0.8 L5.2 5.2 M5.2 0.8 L0.8 5.2" stroke="#f2f2f2" stroke-width="1.3"/></svg>
<div class="a" style="left:14.4px;top:543.38px;width:1008.6px;height:20.46px;background:#075834;"></div>
<div class="sep" style="left:24.5px;top:543.38px;height:20.46px;background:rgba(255,255,255,0.16)"></div>
<div class="sep" style="left:46.0px;top:543.38px;height:20.46px;background:rgba(255,255,255,0.16)"></div>
<div class="sep" style="left:136.5px;top:543.38px;height:20.46px;background:rgba(255,255,255,0.16)"></div>
<div class="sep" style="left:204.5px;top:543.38px;height:20.46px;background:rgba(255,255,255,0.16)"></div>
<div class="sep" style="left:286.5px;top:543.38px;height:20.46px;background:rgba(255,255,255,0.16)"></div>
<div class="sep" style="left:366.0px;top:543.38px;height:20.46px;background:rgba(255,255,255,0.16)"></div>
<div class="sep" style="left:441.0px;top:543.38px;height:20.46px;background:rgba(255,255,255,0.16)"></div>
<div class="sep" style="left:510.0px;top:543.38px;height:20.46px;background:rgba(255,255,255,0.16)"></div>
<div class="sep" style="left:577.5px;top:543.38px;height:20.46px;background:rgba(255,255,255,0.16)"></div>
<div class="sep" style="left:641.0px;top:543.38px;height:20.46px;background:rgba(255,255,255,0.16)"></div>
<div class="sep" style="left:654.5px;top:543.38px;height:20.46px;background:rgba(255,255,255,0.16)"></div>
<div class="sep" style="left:723.5px;top:543.38px;height:20.46px;background:rgba(255,255,255,0.16)"></div>
<div class="sep" style="left:791.0px;top:543.38px;height:20.46px;background:rgba(255,255,255,0.16)"></div>
<div class="sep" style="left:854.5px;top:543.38px;height:20.46px;background:rgba(255,255,255,0.16)"></div>
<div class="sep" style="left:868.5px;top:543.38px;height:20.46px;background:rgba(255,255,255,0.16)"></div>
<div class="sep" style="left:937.5px;top:543.38px;height:20.46px;background:rgba(255,255,255,0.16)"></div>
<div class="sep" style="left:1005.5px;top:543.38px;height:20.46px;background:rgba(255,255,255,0.16)"></div>
<div class="sep" style="left:1016.0px;top:543.38px;height:20.46px;background:rgba(255,255,255,0.16)"></div>
<svg class="a" style="left:15.3px;top:542.88px" width="10" height="9" viewBox="0 0 10 9"><rect x="0.5" y="2" width="6.5" height="6.5" rx="1.2" fill="#0a0a0a" stroke="#555" stroke-width="0.6"/><path d="M1.7 3.6 L3.6 6.8 L7.7 1.1" fill="none" stroke="#e8e8e8" stroke-width="1.2"/></svg>
<svg class="a" style="left:32px;top:543.58px" width="9" height="7" viewBox="0 0 9 7"><path d="M0.3 6.2 L2.2 5.2 L4 4.3 L5 5.6 L6.4 3.4 L7.9 0.6" fill="none" stroke="#1f7a50" stroke-width="0.8"/></svg>
<div class="a" style="left:47.5px;top:544.38px;width:89px;height:7.7px;background:#083822;"></div>
<div class="t " style="left:49px;top:543.13px;transform:scaleX(0.85);transform-origin:0 50%;color:#d8f0e4">VERTICAL</div>
<div class="tri" style="left:133px;top:549.58px;border-bottom-color:#ddd"></div>
<div class="a" style="left:138px;top:544.38px;width:66.5px;height:7.7px;background:#083822;"></div>
<div class="t " style="left:139px;top:543.13px;transform:scaleX(0.85);transform-origin:0 50%;color:#d8f0e4">BUY</div>
<div class="tri" style="left:201px;top:549.58px;border-bottom-color:#ddd"></div>
<div class="t " style="left:139px;top:553.33px;transform:scaleX(0.85);transform-origin:0 50%;color:#d8f0e4">SELL</div>
<div class="a" style="left:206px;top:544.38px;width:57px;height:7.7px;background:#083822;"></div>
<div class="t r " style="left:57.5px;width:200px;top:543.13px;transform:scaleX(0.97);transform-origin:100% 50%;color:#d8f0e4">+1</div>
<div class="a" style="left:264.2px;top:543.98px;width:10.2px;height:4px;background:#0d6a40"></div><div class="a" style="left:264.2px;top:548.58px;width:10.2px;height:4px;background:#0d6a40"></div>
<div class="a" style="left:267.50px;top:545.48px;width:3.6px;height:1.2px;background:#fff"></div><div class="a" style="left:268.70px;top:544.28px;width:1.2px;height:3.6px;background:#fff"></div><div class="a" style="left:267.40px;top:549.98px;width:3.8px;height:1.3px;background:#fff"></div>
<div class="a" style="left:276px;top:543.98px;width:10.5px;height:8.6px;background:#0d6a40"></div>
<div class="a" style="left:277.8px;top:546.78px;width:0;height:0;border-left:2.7px solid transparent;border-right:2.7px solid transparent;border-top:2.9px solid #fff"></div>
<div class="t r " style="left:63.30000000000001px;width:200px;top:553.33px;transform:scaleX(0.97);transform-origin:100% 50%;color:#d8f0e4">-1</div>
<div class="t r " style="left:165px;width:200px;top:543.13px;transform:scaleX(0.85);transform-origin:100% 50%;color:#d8f0e4">SPY</div>
<div class="t r " style="left:165px;width:200px;top:553.33px;transform:scaleX(0.85);transform-origin:100% 50%;color:#d8f0e4">SPY</div>
<div class="a" style="left:367.5px;top:544.38px;width:73.5px;height:7.7px;background:#083822;"></div>
<div class="t " style="left:369px;top:543.13px;transform:scaleX(0.901);transform-origin:0 50%;color:#d8f0e4">18 OCT 24</div>
<div class="tri" style="left:437.5px;top:549.58px;border-bottom-color:#ddd"></div>
<div class="t " style="left:369px;top:553.33px;transform:scaleX(0.901);transform-origin:0 50%;color:#d8f0e4">18 OCT 24</div>
<div class="a" style="left:442.5px;top:544.38px;width:67px;height:7.7px;background:#083822;"></div>
<div class="t " style="left:443.5px;top:543.13px;transform:scaleX(0.94);transform-origin:0 50%;color:#d8f0e4">562</div>
<div class="tri" style="left:506.5px;top:549.58px;border-bottom-color:#ddd"></div>
<div class="a" style="left:442.5px;top:554.48px;width:67px;height:7.7px;background:#083822;"></div>
<div class="t " style="left:443.5px;top:553.33px;transform:scaleX(0.94);transform-origin:0 50%;color:#d8f0e4">561</div>
<div class="tri" style="left:506.5px;top:559.68px;border-bottom-color:#ddd"></div>
<div class="a" style="left:511.5px;top:544.38px;width:66px;height:7.7px;background:#083822;"></div>
<div class="t " style="left:512px;top:543.13px;transform:scaleX(0.85);transform-origin:0 50%;color:#d8f0e4">PUT</div>
<div class="tri" style="left:574px;top:549.58px;border-bottom-color:#ddd"></div>
<div class="t " style="left:512px;top:553.33px;transform:scaleX(0.85);transform-origin:0 50%;color:#d8f0e4">PUT</div>
<div class="a" style="left:579px;top:544.38px;width:49px;height:7.7px;background:#083822;"></div>
<div class="t r " style="left:422.5px;width:200px;top:543.13px;transform:scaleX(0.96);transform-origin:100% 50%;color:#d8f0e4">.19</div>
<div class="a" style="left:628.2px;top:543.98px;width:10.8px;height:4px;background:#0d6a40"></div><div class="a" style="left:628.2px;top:548.58px;width:10.8px;height:4px;background:#0d6a40"></div>
<div class="a" style="left:631.80px;top:545.48px;width:3.6px;height:1.2px;background:#fff"></div><div class="a" style="left:633.00px;top:544.28px;width:1.2px;height:3.6px;background:#fff"></div><div class="a" style="left:631.70px;top:549.98px;width:3.8px;height:1.3px;background:#fff"></div>
<div class="t c " style="left:509px;width:200px;top:553.33px;transform:scaleX(0.85);transform-origin:50% 50%;color:#d8f0e4">DEBIT</div>
<svg class="a" style="left:643.7px;top:543.68px" width="8" height="9" viewBox="0 0 8 9"><path d="M2.2 4.2 V2.7 A1.5 1.5 0 0 1 5.2 2.7 V4.2" fill="none" stroke="#f0e4e4" stroke-width="1"/><rect x="1.2" y="4" width="5" height="3.8" fill="#f0e4e4"/></svg>
<div class="t r " style="left:521.5px;width:200px;top:543.13px;transform:scaleX(0.964);transform-origin:100% 50%;color:#d8f0e4">0.00%</div>
<div class="t r " style="left:521.5px;width:200px;top:553.33px;transform:scaleX(0.964);transform-origin:100% 50%;color:#d8f0e4">0.00%</div>
<div class="t r " style="left:589.5px;width:200px;top:543.13px;transform:scaleX(0.96);transform-origin:100% 50%;color:#d8f0e4">15.56%</div>
<div class="t r " style="left:589.5px;width:200px;top:553.33px;transform:scaleX(0.96);transform-origin:100% 50%;color:#d8f0e4">15.84%</div>
<div class="a" style="left:792.5px;top:544.38px;width:49.5px;height:7.7px;background:#083822;"></div>
<div class="t r " style="left:636px;width:200px;top:543.43px;transform:scaleX(0.964);transform-origin:100% 50%;color:#d8f0e4">0.00%</div>
<div class="a" style="left:842.5px;top:543.98px;width:10.6px;height:4px;background:#0d6a40"></div><div class="a" style="left:842.5px;top:548.58px;width:10.6px;height:4px;background:#0d6a40"></div>
<div class="a" style="left:846.00px;top:545.48px;width:3.6px;height:1.2px;background:#fff"></div><div class="a" style="left:847.20px;top:544.28px;width:1.2px;height:3.6px;background:#fff"></div><div class="a" style="left:845.90px;top:549.98px;width:3.8px;height:1.3px;background:#fff"></div>
<svg class="a" style="left:856.2px;top:543.58px" width="9" height="9" viewBox="0 0 9 9"><path d="M0.9 4.4 V2.9 A1.45 1.45 0 0 1 3.8 2.9 V4" fill="none" stroke="#f0e4e4" stroke-width="1"/><rect x="2.5" y="3.8" width="5.3" height="4" fill="#f0e4e4"/></svg>
<div class="a" style="left:792.5px;top:554.48px;width:49.5px;height:7.7px;background:#083822;"></div>
<div class="t r " style="left:636px;width:200px;top:553.63px;transform:scaleX(0.964);transform-origin:100% 50%;color:#d8f0e4">0.00%</div>
<div class="a" style="left:842.5px;top:554.08px;width:10.6px;height:4px;background:#0d6a40"></div><div class="a" style="left:842.5px;top:558.6800000000001px;width:10.6px;height:4px;background:#0d6a40"></div>
<div class="a" style="left:846.00px;top:555.58px;width:3.6px;height:1.2px;background:#fff"></div><div class="a" style="left:847.20px;top:554.38px;width:1.2px;height:3.6px;background:#fff"></div><div class="a" style="left:845.90px;top:560.08px;width:3.8px;height:1.3px;background:#fff"></div>
<svg class="a" style="left:856.2px;top:553.6800000000001px" width="9" height="9" viewBox="0 0 9 9"><path d="M0.9 4.4 V2.9 A1.45 1.45 0 0 1 3.8 2.9 V4" fill="none" stroke="#f0e4e4" stroke-width="1"/><rect x="2.5" y="3.8" width="5.3" height="4" fill="#f0e4e4"/></svg>
<div class="t r " style="left:736px;width:200px;top:543.13px;transform:scaleX(0.964);transform-origin:100% 50%;color:#d8f0e4">-1.66</div>
<div class="t r " style="left:804px;width:200px;top:543.13px;color:#d8f0e4">-</div>
<div class="t r " style="left:804px;width:200px;top:553.33px;color:#d8f0e4">-</div>
<svg class="a" style="left:1007.5px;top:545.38px" width="6" height="6" viewBox="0 0 6 6"><path d="M0.8 0.8 L5.2 5.2 M5.2 0.8 L0.8 5.2" stroke="#f2f2f2" stroke-width="1.3"/></svg>
<div class="a" style="left:14.4px;top:563.84px;width:1008.6px;height:20.46px;background:#922d2e;"></div>
<div class="sep" style="left:24.5px;top:563.84px;height:20.46px;background:rgba(255,255,255,0.16)"></div>
<div class="sep" style="left:46.0px;top:563.84px;height:20.46px;background:rgba(255,255,255,0.16)"></div>
<div class="sep" style="left:136.5px;top:563.84px;height:20.46px;background:rgba(255,255,255,0.16)"></div>
<div class="sep" style="left:204.5px;top:563.84px;height:20.46px;background:rgba(255,255,255,0.16)"></div>
<div class="sep" style="left:286.5px;top:563.84px;height:20.46px;background:rgba(255,255,255,0.16)"></div>
<div class="sep" style="left:366.0px;top:563.84px;height:20.46px;background:rgba(255,255,255,0.16)"></div>
<div class="sep" style="left:441.0px;top:563.84px;height:20.46px;background:rgba(255,255,255,0.16)"></div>
<div class="sep" style="left:510.0px;top:563.84px;height:20.46px;background:rgba(255,255,255,0.16)"></div>
<div class="sep" style="left:577.5px;top:563.84px;height:20.46px;background:rgba(255,255,255,0.16)"></div>
<div class="sep" style="left:641.0px;top:563.84px;height:20.46px;background:rgba(255,255,255,0.16)"></div>
<div class="sep" style="left:654.5px;top:563.84px;height:20.46px;background:rgba(255,255,255,0.16)"></div>
<div class="sep" style="left:723.5px;top:563.84px;height:20.46px;background:rgba(255,255,255,0.16)"></div>
<div class="sep" style="left:791.0px;top:563.84px;height:20.46px;background:rgba(255,255,255,0.16)"></div>
<div class="sep" style="left:854.5px;top:563.84px;height:20.46px;background:rgba(255,255,255,0.16)"></div>
<div class="sep" style="left:868.5px;top:563.84px;height:20.46px;background:rgba(255,255,255,0.16)"></div>
<div class="sep" style="left:937.5px;top:563.84px;height:20.46px;background:rgba(255,255,255,0.16)"></div>
<div class="sep" style="left:1005.5px;top:563.84px;height:20.46px;background:rgba(255,255,255,0.16)"></div>
<div class="sep" style="left:1016.0px;top:563.84px;height:20.46px;background:rgba(255,255,255,0.16)"></div>
<svg class="a" style="left:15.3px;top:563.34px" width="10" height="9" viewBox="0 0 10 9"><rect x="0.5" y="2" width="6.5" height="6.5" rx="1.2" fill="#0a0a0a" stroke="#555" stroke-width="0.6"/><path d="M1.7 3.6 L3.6 6.8 L7.7 1.1" fill="none" stroke="#e8e8e8" stroke-width="1.2"/></svg>
<svg class="a" style="left:32px;top:564.0400000000001px" width="9" height="7" viewBox="0 0 9 7"><path d="M0.3 6.2 L2.2 5.2 L4 4.3 L5 5.6 L6.4 3.4 L7.9 0.6" fill="none" stroke="#ad4a4b" stroke-width="0.8"/></svg>
<div class="a" style="left:47.5px;top:564.84px;width:89px;height:7.7px;background:#5a1f1f;"></div>
<div class="t " style="left:49px;top:563.59px;transform:scaleX(0.85);transform-origin:0 50%;color:#f4dede">VERTICAL</div>
<div class="tri" style="left:133px;top:570.0400000000001px;border-bottom-color:#ddd"></div>
<div class="a" style="left:138px;top:564.84px;width:66.5px;height:7.7px;background:#5a1f1f;"></div>
<div class="t " style="left:139px;top:563.59px;transform:scaleX(0.85);transform-origin:0 50%;color:#f4dede">SELL</div>
<div class="tri" style="left:201px;top:570.0400000000001px;border-bottom-color:#ddd"></div>
<div class="t " style="left:139px;top:573.79px;transform:scaleX(0.85);transform-origin:0 50%;color:#f4dede">BUY</div>
<div class="a" style="left:206px;top:564.84px;width:57px;height:7.7px;background:#5a1f1f;"></div>
<div class="t r " style="left:57.5px;width:200px;top:563.59px;transform:scaleX(0.97);transform-origin:100% 50%;color:#f4dede">-1</div>
<div class="a" style="left:264.2px;top:564.44px;width:10.2px;height:4px;background:#a03536"></div><div class="a" style="left:264.2px;top:569.0400000000001px;width:10.2px;height:4px;background:#a03536"></div>
<div class="a" style="left:267.50px;top:565.94px;width:3.6px;height:1.2px;background:#fff"></div><div class="a" style="left:268.70px;top:564.74px;width:1.2px;height:3.6px;background:#fff"></div><div class="a" style="left:267.40px;top:570.44px;width:3.8px;height:1.3px;background:#fff"></div>
<div class="a" style="left:276px;top:564.44px;width:10.5px;height:8.6px;background:#a03536"></div>
<div class="a" style="left:277.8px;top:567.24px;width:0;height:0;border-left:2.7px solid transparent;border-right:2.7px solid transparent;border-top:2.9px solid #fff"></div>
<div class="t r " style="left:63.30000000000001px;width:200px;top:573.79px;transform:scaleX(0.97);transform-origin:100% 50%;color:#f4dede">+1</div>
<div class="t r " style="left:165px;width:200px;top:563.59px;transform:scaleX(0.85);transform-origin:100% 50%;color:#f4dede">SPY</div>
<div class="t r " style="left:165px;width:200px;top:573.79px;transform:scaleX(0.85);transform-origin:100% 50%;color:#f4dede">SPY</div>
<div class="a" style="left:367.5px;top:564.84px;width:73.5px;height:7.7px;background:#5a1f1f;"></div>
<div class="t " style="left:369px;top:563.59px;transform:scaleX(0.901);transform-origin:0 50%;color:#f4dede">18 OCT 24</div>
<div class="tri" style="left:437.5px;top:570.0400000000001px;border-bottom-color:#ddd"></div>
<div class="t " style="left:369px;top:573.79px;transform:scaleX(0.901);transform-origin:0 50%;color:#f4dede">18 OCT 24</div>
<div class="a" style="left:442.5px;top:564.84px;width:67px;height:7.7px;background:#5a1f1f;"></div>
<div class="t " style="left:443.5px;top:563.59px;transform:scaleX(0.94);transform-origin:0 50%;color:#f4dede">570</div>
<div class="tri" style="left:506.5px;top:570.0400000000001px;border-bottom-color:#ddd"></div>
<div class="a" style="left:442.5px;top:574.94px;width:67px;height:7.7px;background:#5a1f1f;"></div>
<div class="t " style="left:443.5px;top:573.79px;transform:scaleX(0.94);transform-origin:0 50%;color:#f4dede">569</div>
<div class="tri" style="left:506.5px;top:580.14px;border-bottom-color:#ddd"></div>
<div class="a" style="left:511.5px;top:564.84px;width:66px;height:7.7px;background:#5a1f1f;"></div>
<div class="t " style="left:512px;top:563.59px;transform:scaleX(0.85);transform-origin:0 50%;color:#f4dede">PUT</div>
<div class="tri" style="left:574px;top:570.0400000000001px;border-bottom-color:#ddd"></div>
<div class="t " style="left:512px;top:573.79px;transform:scaleX(0.85);transform-origin:0 50%;color:#f4dede">PUT</div>
<div class="a" style="left:579px;top:564.84px;width:49px;height:7.7px;background:#5a1f1f;"></div>
<div class="t r " style="left:422.5px;width:200px;top:563.59px;transform:scaleX(0.96);transform-origin:100% 50%;color:#f4dede">.34</div>
<div class="a" style="left:628.2px;top:564.44px;width:10.8px;height:4px;background:#a03536"></div><div class="a" style="left:628.2px;top:569.0400000000001px;width:10.8px;height:4px;background:#a03536"></div>
<div class="a" style="left:631.80px;top:565.94px;width:3.6px;height:1.2px;background:#fff"></div><div class="a" style="left:633.00px;top:564.74px;width:1.2px;height:3.6px;background:#fff"></div><div class="a" style="left:631.70px;top:570.44px;width:3.8px;height:1.3px;background:#fff"></div>
<div class="t c " style="left:509px;width:200px;top:573.79px;transform:scaleX(0.85);transform-origin:50% 50%;color:#f4dede">CREDIT</div>
<svg class="a" style="left:643.7px;top:564.14px" width="8" height="9" viewBox="0 0 8 9"><path d="M2.2 4.2 V2.7 A1.5 1.5 0 0 1 5.2 2.7 V4.2" fill="none" stroke="#f0e4e4" stroke-width="1"/><rect x="1.2" y="4" width="5" height="3.8" fill="#f0e4e4"/></svg>
<div class="t r " style="left:521.5px;width:200px;top:563.59px;transform:scaleX(0.964);transform-origin:100% 50%;color:#f4dede">0.00%</div>
<div class="t r " style="left:521.5px;width:200px;top:573.79px;transform:scaleX(0.964);transform-origin:100% 50%;color:#f4dede">0.00%</div>
<div class="t r " style="left:589.5px;width:200px;top:563.59px;transform:scaleX(0.96);transform-origin:100% 50%;color:#f4dede">13.47%</div>
<div class="t r " style="left:589.5px;width:200px;top:573.79px;transform:scaleX(0.96);transform-origin:100% 50%;color:#f4dede">13.73%</div>
<div class="a" style="left:792.5px;top:564.84px;width:49.5px;height:7.7px;background:#5a1f1f;"></div>
<div class="t r " style="left:636px;width:200px;top:563.89px;transform:scaleX(0.964);transform-origin:100% 50%;color:#f4dede">0.00%</div>
<div class="a" style="left:842.5px;top:564.44px;width:10.6px;height:4px;background:#a03536"></div><div class="a" style="left:842.5px;top:569.0400000000001px;width:10.6px;height:4px;background:#a03536"></div>
<div class="a" style="left:846.00px;top:565.94px;width:3.6px;height:1.2px;background:#fff"></div><div class="a" style="left:847.20px;top:564.74px;width:1.2px;height:3.6px;background:#fff"></div><div class="a" style="left:845.90px;top:570.44px;width:3.8px;height:1.3px;background:#fff"></div>
<svg class="a" style="left:856.2px;top:564.0400000000001px" width="9" height="9" viewBox="0 0 9 9"><path d="M0.9 4.4 V2.9 A1.45 1.45 0 0 1 3.8 2.9 V4" fill="none" stroke="#f0e4e4" stroke-width="1"/><rect x="2.5" y="3.8" width="5.3" height="4" fill="#f0e4e4"/></svg>
<div class="a" style="left:792.5px;top:574.94px;width:49.5px;height:7.7px;background:#5a1f1f;"></div>
<div class="t r " style="left:636px;width:200px;top:574.09px;transform:scaleX(0.964);transform-origin:100% 50%;color:#f4dede">0.00%</div>
<div class="a" style="left:842.5px;top:574.5400000000001px;width:10.6px;height:4px;background:#a03536"></div><div class="a" style="left:842.5px;top:579.1400000000001px;width:10.6px;height:4px;background:#a03536"></div>
<div class="a" style="left:846.00px;top:576.0400000000001px;width:3.6px;height:1.2px;background:#fff"></div><div class="a" style="left:847.20px;top:574.84px;width:1.2px;height:3.6px;background:#fff"></div><div class="a" style="left:845.90px;top:580.5400000000001px;width:3.8px;height:1.3px;background:#fff"></div>
<svg class="a" style="left:856.2px;top:574.1400000000001px" width="9" height="9" viewBox="0 0 9 9"><path d="M0.9 4.4 V2.9 A1.45 1.45 0 0 1 3.8 2.9 V4" fill="none" stroke="#f0e4e4" stroke-width="1"/><rect x="2.5" y="3.8" width="5.3" height="4" fill="#f0e4e4"/></svg>
<div class="t r " style="left:736px;width:200px;top:563.59px;transform:scaleX(0.955);transform-origin:100% 50%;color:#f4dede">2.41</div>
<div class="t r " style="left:804px;width:200px;top:563.59px;color:#f4dede">-</div>
<div class="t r " style="left:804px;width:200px;top:573.79px;color:#f4dede">-</div>
<svg class="a" style="left:1007.5px;top:565.84px" width="6" height="6" viewBox="0 0 6 6"><path d="M0.8 0.8 L5.2 5.2 M5.2 0.8 L0.8 5.2" stroke="#f2f2f2" stroke-width="1.3"/></svg>
<div class="sep" style="left:24.5px;top:584px;height:10px;background:#1f1f1f"></div>
<div class="sep" style="left:46.0px;top:584px;height:10px;background:#1f1f1f"></div>
<div class="sep" style="left:136.5px;top:584px;height:10px;background:#1f1f1f"></div>
<div class="sep" style="left:204.5px;top:584px;height:10px;background:#1f1f1f"></div>
<div class="sep" style="left:286.5px;top:584px;height:10px;background:#1f1f1f"></div>
<div class="sep" style="left:366.0px;top:584px;height:10px;background:#1f1f1f"></div>
<div class="sep" style="left:441.0px;top:584px;height:10px;background:#1f1f1f"></div>
<div class="sep" style="left:510.0px;top:584px;height:10px;background:#1f1f1f"></div>
<div class="sep" style="left:577.5px;top:584px;height:10px;background:#1f1f1f"></div>
<div class="sep" style="left:641.0px;top:584px;height:10px;background:#1f1f1f"></div>
<div class="sep" style="left:654.5px;top:584px;height:10px;background:#1f1f1f"></div>
<div class="sep" style="left:723.5px;top:584px;height:10px;background:#1f1f1f"></div>
<div class="sep" style="left:791.0px;top:584px;height:10px;background:#1f1f1f"></div>
<div class="sep" style="left:854.5px;top:584px;height:10px;background:#1f1f1f"></div>
<div class="sep" style="left:868.5px;top:584px;height:10px;background:#1f1f1f"></div>
<div class="sep" style="left:937.5px;top:584px;height:10px;background:#1f1f1f"></div>
<div class="sep" style="left:1005.5px;top:584px;height:10px;background:#1f1f1f"></div>
<div class="sep" style="left:1016.0px;top:584px;height:10px;background:#1f1f1f"></div>
<div class="a" style="left:14.4px;top:593.8px;width:1002.6px;height:1px;background:#2c2c2c;"></div>
<div class="sep" style="left:14.2px;top:471.3px;height:123px;background:#3a3a3a"></div>
<div class="t r " style="left:804.5px;width:200px;top:584.30px;transform:scaleX(0.967);transform-origin:100% 50%;color:#e8e8e8">($100.00)</div>
</body></html>
